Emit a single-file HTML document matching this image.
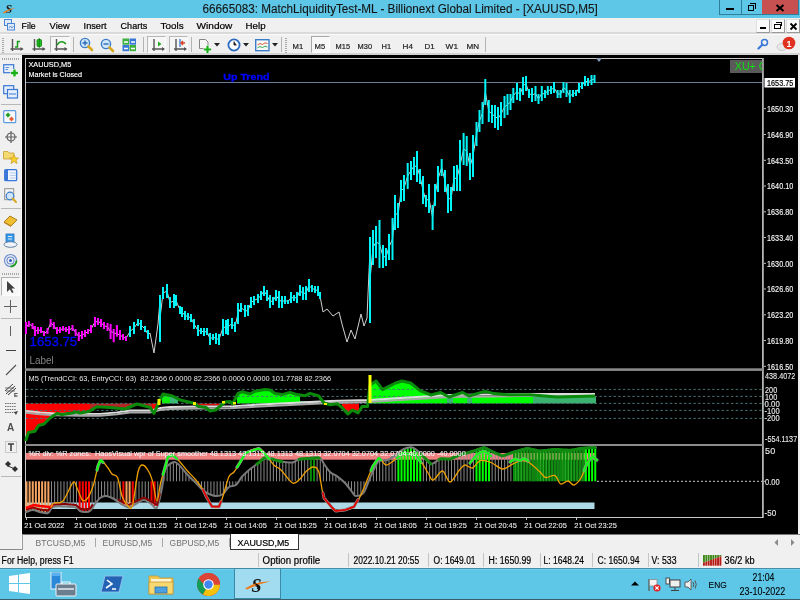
<!DOCTYPE html>
<html><head><meta charset="utf-8"><style>
html,body{margin:0;padding:0;width:800px;height:600px;overflow:hidden;background:#f0f0f0;position:relative;font-family:"Liberation Sans", sans-serif}
body{will-change:transform}
.t{position:absolute;white-space:nowrap;line-height:1;font-family:"Liberation Sans", sans-serif}
.b{position:absolute}
svg{position:absolute}
</style></head><body>
<div class="b" style="left:0px;top:0px;width:800px;height:18px;background:#5ec6e6"></div>
<svg style="left:202.00px;top:-1px;overflow:visible" width="406" height="21"><text x="0.6" y="14.00" font-family="Liberation Sans" font-size="12" font-weight="normal" fill="#141414" textLength="395.10" lengthAdjust="spacingAndGlyphs" stroke="#141414" stroke-width="0.1">66665083: MatchLiquidityTest-ML - Billionext Global Limited - [XAUUSD,M5]</text></svg>
<div class="b" style="left:719px;top:0px;width:80px;height:15px;background:#2f7f9c"></div>
<div class="b" style="left:720px;top:0px;width:21px;height:14px;background:#5ec6e6"></div>
<div class="b" style="left:742px;top:0px;width:20px;height:14px;background:#5ec6e6"></div>
<div class="b" style="left:762px;top:0px;width:36px;height:14px;background:#c75050"></div>
<div class="b" style="left:726px;top:8px;width:8px;height:2px;background:#000"></div>
<div class="b" style="left:748px;top:5px;width:6px;height:6px;border:1.6px solid #000;box-sizing:border-box"></div>
<div class="b" style="left:750px;top:3px;width:6px;height:6px;border-top:1.5px solid #000;border-right:1.5px solid #000;box-sizing:border-box"></div>
<svg style="left:775px;top:4px" width="10" height="8"><path d="M1.5 1L8.5 7M8.5 1L1.5 7" stroke="#000" stroke-width="2"/></svg>
<div class="b" style="left:0px;top:18px;width:800px;height:15px;background:#f0f0f0"></div>
<div class="b" style="left:0px;top:32px;width:800px;height:2px;background:#dadada"></div>
<svg style="left:21.00px;top:18px;overflow:visible" width="25" height="16"><text x="0.6" y="11.00" font-family="Liberation Sans" font-size="9" font-weight="normal" fill="#000" textLength="14.10" lengthAdjust="spacingAndGlyphs" stroke="#000" stroke-width="0.2">File</text></svg>
<svg style="left:49.00px;top:18px;overflow:visible" width="31" height="16"><text x="0.6" y="11.00" font-family="Liberation Sans" font-size="9" font-weight="normal" fill="#000" textLength="20.10" lengthAdjust="spacingAndGlyphs" stroke="#000" stroke-width="0.2">View</text></svg>
<svg style="left:82.60px;top:18px;overflow:visible" width="34" height="16"><text x="0.6" y="11.00" font-family="Liberation Sans" font-size="9" font-weight="normal" fill="#000" textLength="23.00" lengthAdjust="spacingAndGlyphs" stroke="#000" stroke-width="0.2">Insert</text></svg>
<svg style="left:119.60px;top:18px;overflow:visible" width="38" height="16"><text x="0.6" y="11.00" font-family="Liberation Sans" font-size="9" font-weight="normal" fill="#000" textLength="26.60" lengthAdjust="spacingAndGlyphs" stroke="#000" stroke-width="0.2">Charts</text></svg>
<svg style="left:160.00px;top:18px;overflow:visible" width="34" height="16"><text x="0.6" y="11.00" font-family="Liberation Sans" font-size="9" font-weight="normal" fill="#000" textLength="23.00" lengthAdjust="spacingAndGlyphs" stroke="#000" stroke-width="0.2">Tools</text></svg>
<svg style="left:196.40px;top:18px;overflow:visible" width="47" height="16"><text x="0.6" y="11.00" font-family="Liberation Sans" font-size="9" font-weight="normal" fill="#000" textLength="35.80" lengthAdjust="spacingAndGlyphs" stroke="#000" stroke-width="0.2">Window</text></svg>
<svg style="left:245.00px;top:18px;overflow:visible" width="31" height="16"><text x="0.6" y="11.00" font-family="Liberation Sans" font-size="9" font-weight="normal" fill="#000" textLength="20.00" lengthAdjust="spacingAndGlyphs" stroke="#000" stroke-width="0.2">Help</text></svg>
<div class="b" style="left:756px;top:19px;width:14px;height:14px;background:#fafafa;border:1px solid #9a9a9a;border-top-color:#e0e0e0;border-left-color:#e0e0e0;box-sizing:border-box"></div>
<div class="b" style="left:771px;top:19px;width:14px;height:14px;background:#fafafa;border:1px solid #9a9a9a;border-top-color:#e0e0e0;border-left-color:#e0e0e0;box-sizing:border-box"></div>
<div class="b" style="left:786px;top:19px;width:14px;height:14px;background:#fafafa;border:1px solid #9a9a9a;border-top-color:#e0e0e0;border-left-color:#e0e0e0;box-sizing:border-box"></div>
<div class="b" style="left:760px;top:27px;width:6px;height:2px;background:#000"></div>
<div class="b" style="left:774px;top:24px;width:7px;height:5px;border:1.5px solid #000;box-sizing:border-box"></div>
<div class="b" style="left:776px;top:22px;width:6px;height:4px;border-top:1.5px solid #000;border-right:1.5px solid #000;box-sizing:border-box"></div>
<svg style="left:789px;top:22px" width="9" height="9"><path d="M1.5 1.5L7.5 7.5M7.5 1.5L1.5 7.5" stroke="#000" stroke-width="1.8"/></svg>
<div class="b" style="left:0px;top:34px;width:800px;height:20px;background:#f0f0f0"></div>
<div class="b" style="left:0px;top:34px;width:800px;height:1px;background:#fafafa"></div>
<div class="b" style="left:0px;top:53px;width:800px;height:2px;background:#d4d4d4"></div>
<div class="b" style="left:311px;top:36px;width:19px;height:17px;background:#f8f8f8;border:1px solid #a8a8a8;border-right-color:#fdfdfd;border-bottom-color:#fdfdfd;box-sizing:border-box"></div>
<svg style="left:292.00px;top:39px;overflow:visible" width="22" height="14"><text x="0.6" y="9.60" font-family="Liberation Sans" font-size="8" font-weight="normal" fill="#222" textLength="10.60" lengthAdjust="spacingAndGlyphs" stroke="#222" stroke-width="0.2">M1</text></svg>
<svg style="left:314.00px;top:39px;overflow:visible" width="22" height="14"><text x="0.6" y="9.60" font-family="Liberation Sans" font-size="8" font-weight="normal" fill="#222" textLength="10.60" lengthAdjust="spacingAndGlyphs" stroke="#222" stroke-width="0.2">M5</text></svg>
<svg style="left:334.60px;top:39px;overflow:visible" width="25" height="14"><text x="0.6" y="9.60" font-family="Liberation Sans" font-size="8" font-weight="normal" fill="#222" textLength="14.40" lengthAdjust="spacingAndGlyphs" stroke="#222" stroke-width="0.2">M15</text></svg>
<svg style="left:356.50px;top:39px;overflow:visible" width="25" height="14"><text x="0.6" y="9.60" font-family="Liberation Sans" font-size="8" font-weight="normal" fill="#222" textLength="14.40" lengthAdjust="spacingAndGlyphs" stroke="#222" stroke-width="0.2">M30</text></svg>
<svg style="left:380.70px;top:39px;overflow:visible" width="21" height="14"><text x="0.6" y="9.60" font-family="Liberation Sans" font-size="8" font-weight="normal" fill="#222" textLength="9.60" lengthAdjust="spacingAndGlyphs" stroke="#222" stroke-width="0.2">H1</text></svg>
<svg style="left:401.70px;top:39px;overflow:visible" width="21" height="14"><text x="0.6" y="9.60" font-family="Liberation Sans" font-size="8" font-weight="normal" fill="#222" textLength="10.40" lengthAdjust="spacingAndGlyphs" stroke="#222" stroke-width="0.2">H4</text></svg>
<svg style="left:424.20px;top:39px;overflow:visible" width="21" height="14"><text x="0.6" y="9.60" font-family="Liberation Sans" font-size="8" font-weight="normal" fill="#222" textLength="10.10" lengthAdjust="spacingAndGlyphs" stroke="#222" stroke-width="0.2">D1</text></svg>
<svg style="left:445.20px;top:39px;overflow:visible" width="23" height="14"><text x="0.6" y="9.60" font-family="Liberation Sans" font-size="8" font-weight="normal" fill="#222" textLength="12.40" lengthAdjust="spacingAndGlyphs" stroke="#222" stroke-width="0.2">W1</text></svg>
<svg style="left:466.20px;top:39px;overflow:visible" width="24" height="14"><text x="0.6" y="9.60" font-family="Liberation Sans" font-size="8" font-weight="normal" fill="#222" textLength="12.60" lengthAdjust="spacingAndGlyphs" stroke="#222" stroke-width="0.2">MN</text></svg>
<div class="b" style="left:0px;top:55px;width:22px;height:495px;background:#f0f0f0"></div>
<div class="b" style="left:21px;top:55px;width:1px;height:495px;background:#fafafa"></div>
<div class="b" style="left:0px;top:549px;width:23px;height:1px;background:#8a8a8a"></div>
<div class="b" style="left:22px;top:55px;width:776px;height:479px;background:#000"></div>
<div class="b" style="left:798px;top:55px;width:2px;height:479px;background:#f0f0f0"></div>
<div class="b" style="left:22px;top:534px;width:778px;height:16px;background:#f0f0f0"></div>
<div class="b" style="left:22px;top:534px;width:778px;height:1px;background:#7a7a7a"></div>
<div class="b" style="left:22px;top:534px;width:1px;height:16px;background:#9a9a9a"></div>
<div class="b" style="left:230px;top:534px;width:69px;height:16px;background:#fff;border:1px solid #333;border-top:none;box-sizing:border-box"></div>
<svg style="left:35.00px;top:535px;overflow:visible" width="61" height="16"><text x="0.6" y="11.00" font-family="Liberation Sans" font-size="9" font-weight="normal" fill="#707070" textLength="49.60" lengthAdjust="spacingAndGlyphs">BTCUSD,M5</text></svg>
<svg style="left:102.00px;top:535px;overflow:visible" width="61" height="16"><text x="0.6" y="11.00" font-family="Liberation Sans" font-size="9" font-weight="normal" fill="#707070" textLength="49.60" lengthAdjust="spacingAndGlyphs">EURUSD,M5</text></svg>
<svg style="left:169.00px;top:535px;overflow:visible" width="61" height="16"><text x="0.6" y="11.00" font-family="Liberation Sans" font-size="9" font-weight="normal" fill="#707070" textLength="49.60" lengthAdjust="spacingAndGlyphs">GBPUSD,M5</text></svg>
<svg style="left:237.00px;top:535px;overflow:visible" width="63" height="16"><text x="0.6" y="11.00" font-family="Liberation Sans" font-size="9" font-weight="normal" fill="#000" textLength="51.60" lengthAdjust="spacingAndGlyphs" stroke="#000" stroke-width="0.2">XAUUSD,M5</text></svg>
<div class="b" style="left:95px;top:538px;width:1px;height:9px;background:#a8a8a8"></div>
<div class="b" style="left:162px;top:538px;width:1px;height:9px;background:#a8a8a8"></div>
<div class="b" style="left:229px;top:538px;width:1px;height:9px;background:#a8a8a8"></div>
<svg style="left:773px;top:538px" width="24" height="9"><path d="M5 1L1.5 4.5L5 8Z" fill="#8a8a8a"/><path d="M18 1L21.5 4.5L18 8Z" fill="#8a8a8a"/></svg>
<div class="b" style="left:0px;top:550px;width:800px;height:18px;background:#f0f0f0"></div>
<svg style="left:1.00px;top:552px;overflow:visible" width="83" height="18"><text x="0.6" y="12.00" font-family="Liberation Sans" font-size="10" font-weight="normal" fill="#000" textLength="72.10" lengthAdjust="spacingAndGlyphs" stroke="#000" stroke-width="0.2">For Help, press F1</text></svg>
<div class="b" style="left:258px;top:553px;width:1px;height:14px;background:#c4c4c4"></div>
<div class="b" style="left:348px;top:553px;width:1px;height:14px;background:#c4c4c4"></div>
<div class="b" style="left:428px;top:553px;width:1px;height:14px;background:#c4c4c4"></div>
<div class="b" style="left:483px;top:553px;width:1px;height:14px;background:#c4c4c4"></div>
<div class="b" style="left:540px;top:553px;width:1px;height:14px;background:#c4c4c4"></div>
<div class="b" style="left:592px;top:553px;width:1px;height:14px;background:#c4c4c4"></div>
<div class="b" style="left:648px;top:553px;width:1px;height:14px;background:#c4c4c4"></div>
<div class="b" style="left:698px;top:553px;width:1px;height:14px;background:#c4c4c4"></div>
<svg style="left:262.00px;top:552px;overflow:visible" width="69" height="18"><text x="0.6" y="12.00" font-family="Liberation Sans" font-size="10" font-weight="normal" fill="#000" textLength="57.60" lengthAdjust="spacingAndGlyphs" stroke="#000" stroke-width="0.2">Option profile</text></svg>
<svg style="left:352.50px;top:552px;overflow:visible" width="77" height="18"><text x="0.6" y="12.00" font-family="Liberation Sans" font-size="10" font-weight="normal" fill="#000" textLength="65.60" lengthAdjust="spacingAndGlyphs" stroke="#000" stroke-width="0.2">2022.10.21 20:55</text></svg>
<svg style="left:432.60px;top:552px;overflow:visible" width="53" height="18"><text x="0.6" y="12.00" font-family="Liberation Sans" font-size="10" font-weight="normal" fill="#000" textLength="42.00" lengthAdjust="spacingAndGlyphs" stroke="#000" stroke-width="0.2">O: 1649.01</text></svg>
<svg style="left:487.50px;top:552px;overflow:visible" width="54" height="18"><text x="0.6" y="12.00" font-family="Liberation Sans" font-size="10" font-weight="normal" fill="#000" textLength="42.60" lengthAdjust="spacingAndGlyphs" stroke="#000" stroke-width="0.2">H: 1650.99</text></svg>
<svg style="left:543.20px;top:552px;overflow:visible" width="51" height="18"><text x="0.6" y="12.00" font-family="Liberation Sans" font-size="10" font-weight="normal" fill="#000" textLength="40.40" lengthAdjust="spacingAndGlyphs" stroke="#000" stroke-width="0.2">L: 1648.24</text></svg>
<svg style="left:596.50px;top:552px;overflow:visible" width="53" height="18"><text x="0.6" y="12.00" font-family="Liberation Sans" font-size="10" font-weight="normal" fill="#000" textLength="41.80" lengthAdjust="spacingAndGlyphs" stroke="#000" stroke-width="0.2">C: 1650.94</text></svg>
<svg style="left:650.50px;top:552px;overflow:visible" width="36" height="18"><text x="0.6" y="12.00" font-family="Liberation Sans" font-size="10" font-weight="normal" fill="#000" textLength="24.90" lengthAdjust="spacingAndGlyphs" stroke="#000" stroke-width="0.2">V: 533</text></svg>
<svg style="left:724.00px;top:552px;overflow:visible" width="41" height="18"><text x="0.6" y="12.00" font-family="Liberation Sans" font-size="10" font-weight="normal" fill="#000" textLength="30.00" lengthAdjust="spacingAndGlyphs" stroke="#000" stroke-width="0.2">36/2 kb</text></svg>
<div class="b" style="left:0px;top:568px;width:800px;height:32px;background:#5ec6e6"></div>
<div class="b" style="left:0px;top:568px;width:800px;height:1px;background:#4a8ca4"></div>
<div class="b" style="left:0px;top:569px;width:800px;height:1px;background:#6ad2f2"></div>
<div class="b" style="left:0px;top:599px;width:800px;height:1px;background:#3c5e6c"></div>
<div class="b" style="left:234px;top:568px;width:47px;height:31px;background:#a2dcf0;border:1px solid #3d8aa6;box-sizing:border-box"></div>
<svg style="left:751.50px;top:568px;overflow:visible" width="33" height="18"><text x="0.6" y="13.30" font-family="Liberation Sans" font-size="10.3" font-weight="normal" fill="#000" textLength="21.90" lengthAdjust="spacingAndGlyphs" stroke="#000" stroke-width="0.1">21:04</text></svg>
<svg style="left:739.00px;top:582px;overflow:visible" width="57" height="18"><text x="0.6" y="12.50" font-family="Liberation Sans" font-size="10.3" font-weight="normal" fill="#000" textLength="45.60" lengthAdjust="spacingAndGlyphs" stroke="#000" stroke-width="0.1">23-10-2022</text></svg>
<svg style="left:707.80px;top:576px;overflow:visible" width="29" height="16"><text x="0.6" y="12.00" font-family="Liberation Sans" font-size="9.3" font-weight="normal" fill="#000" textLength="18.10" lengthAdjust="spacingAndGlyphs" stroke="#000" stroke-width="0.1">ENG</text></svg>
<svg style="left:0;top:0;will-change:transform" width="800" height="600" viewBox="0 0 800 600">
<rect x="25" y="58" width="738" height="1" fill="#c8c8c8"/>
<rect x="25" y="58" width="1" height="460" fill="#c8c8c8"/>
<rect x="762" y="58" width="1.8" height="460" fill="#b4b4b4"/>
<rect x="25" y="368.3" width="738" height="2.6" fill="#8a8a8a"/>
<rect x="25" y="444" width="738" height="2" fill="#8c8c8c"/>
<rect x="25" y="517" width="738" height="1" fill="#c8c8c8"/>
<rect x="26" y="82" width="736" height="1" fill="#6a7f95"/>
<polyline points="26.0,328.0 28.8,324.0 32.5,326.0 35.0,331.0 38.0,330.5 41.0,330.0 44.0,333.5 47.5,331.0 50.6,323.0 53.8,325.5 57.0,330.5 60.0,330.0 63.0,328.5 66.0,329.5 69.0,330.0 72.5,328.0 75.6,332.5 78.8,336.5 82.0,335.0 85.0,333.5 88.0,331.5 91.0,329.0 95.0,322.0 98.0,321.5 101.0,323.0 104.0,325.5 107.5,327.0 110.6,331.5 120.0,335.0 123.0,337.0 126.0,338.5 130.0,331.5 134.0,328.0 138.0,322.5 141.0,325.0 145.0,329.0 148.0,334.5" fill="none" stroke="#d0d0d0" stroke-width="1" stroke-linejoin="round" />
<polyline points="148.0,335.0 150.0,333.0 154.0,353.0 158.0,324.0 160.0,300.0" fill="none" stroke="#d0d0d0" stroke-width="1" stroke-linejoin="round" />
<polyline points="160.0,318.5 163.0,293.0 167.0,291.0 170.0,302.5 174.0,301.0 176.0,300.5 180.0,310.0 182.0,312.0 185.0,315.5 188.0,316.5 191.0,318.0 194.0,324.0 198.0,330.5 201.0,331.0 204.0,332.0 207.0,331.5 210.0,339.0 213.0,337.0 216.0,338.5 219.0,339.5 223.0,327.5 226.0,327.0 228.0,327.0 232.0,323.5 235.0,327.0 238.0,313.5 241.0,307.5 245.0,311.0 248.0,310.5 251.0,302.5 254.0,300.5 258.0,298.5 261.0,295.5 264.0,291.0 267.0,295.5 270.0,301.5 273.0,301.0 276.0,295.5 279.0,299.5 282.0,302.0 285.0,300.0 288.0,302.0 291.0,297.5 294.0,298.0 297.0,297.5 300.0,290.5 303.0,293.5 306.0,293.0 309.0,285.5 312.0,288.5 315.0,289.5 318.0,291.0 320.0,295.5" fill="none" stroke="#d0d0d0" stroke-width="1" stroke-linejoin="round" />
<polyline points="320.0,296.0 323.0,312.0 327.0,309.0 333.0,316.0 339.0,312.0 342.0,324.0 347.0,342.0 351.0,330.0 355.0,339.0 361.0,314.0 364.0,326.0 367.0,318.0 368.0,294.0 370.0,250.0" fill="none" stroke="#d0d0d0" stroke-width="1" stroke-linejoin="round" />
<polyline points="370.0,280.0 373.0,247.5 376.0,242.0 379.5,244.0 383.0,256.5 386.0,257.0 389.0,247.0 392.5,239.0 395.0,212.5 398.0,215.5 401.0,191.0 404.0,188.0 407.7,176.0 411.0,170.5 414.0,166.0 417.0,166.5 420.0,176.5 423.0,190.0 426.0,201.0 429.0,198.5 432.6,217.5 435.0,195.0 438.0,179.0 441.7,167.5 445.0,181.0 448.0,198.5 451.0,199.0 454.0,178.5 457.0,178.0 460.0,165.5 463.6,149.0 466.7,151.0 470.0,166.5 473.0,156.0 476.5,134.0 479.5,121.0 482.5,113.0 485.3,92.0 488.8,111.0 492.0,114.0 495.0,116.5 498.0,118.5 501.0,114.0 504.5,107.0 507.5,104.5 510.5,102.0 513.3,95.5 517.0,91.5 520.0,94.5 523.0,86.0 526.0,83.5 529.0,93.5 532.0,95.0 535.5,93.5 538.5,99.0 541.8,93.5 545.0,94.0 547.8,90.5 551.0,90.0 554.0,87.5 557.6,94.0 560.5,94.0 563.5,87.5 566.5,90.0 569.8,96.5 573.0,93.5 576.0,93.0 579.0,88.0 582.0,85.5 585.0,81.0 588.0,82.0 591.5,80.0 594.5,79.0" fill="none" stroke="#d0d0d0" stroke-width="1" stroke-linejoin="round" />
<rect x="25.0" y="322" width="2" height="12" fill="#ff00ff"/>
<rect x="27.8" y="321" width="2" height="6" fill="#ff00ff"/>
<rect x="31.5" y="323" width="2" height="6" fill="#ff00ff"/>
<rect x="34.0" y="326" width="2" height="10" fill="#ff00ff"/>
<rect x="37.0" y="327" width="2" height="7" fill="#ff00ff"/>
<rect x="40.0" y="327" width="2" height="6" fill="#ff00ff"/>
<rect x="43.0" y="331" width="2" height="5" fill="#ff00ff"/>
<rect x="46.5" y="328" width="2" height="6" fill="#ff00ff"/>
<rect x="49.6" y="319" width="2" height="8" fill="#ff00ff"/>
<rect x="52.8" y="322" width="2" height="7" fill="#ff00ff"/>
<rect x="56.0" y="327" width="2" height="7" fill="#ff00ff"/>
<rect x="59.0" y="327" width="2" height="6" fill="#ff00ff"/>
<rect x="62.0" y="326" width="2" height="5" fill="#ff00ff"/>
<rect x="65.0" y="327" width="2" height="5" fill="#ff00ff"/>
<rect x="68.0" y="326" width="2" height="8" fill="#ff00ff"/>
<rect x="71.5" y="325" width="2" height="6" fill="#ff00ff"/>
<rect x="74.6" y="329" width="2" height="7" fill="#ff00ff"/>
<rect x="77.8" y="332" width="2" height="9" fill="#ff00ff"/>
<rect x="81.0" y="331" width="2" height="8" fill="#ff00ff"/>
<rect x="84.0" y="330" width="2" height="7" fill="#ff00ff"/>
<rect x="87.0" y="329" width="2" height="5" fill="#ff00ff"/>
<rect x="90.0" y="325" width="2" height="8" fill="#ff00ff"/>
<rect x="94.0" y="317" width="2" height="10" fill="#ff00ff"/>
<rect x="97.0" y="318" width="2" height="7" fill="#ff00ff"/>
<rect x="100.0" y="319" width="2" height="8" fill="#ff00ff"/>
<rect x="103.0" y="322" width="2" height="7" fill="#ff00ff"/>
<rect x="106.5" y="323" width="2" height="8" fill="#ff00ff"/>
<rect x="109.6" y="324" width="2" height="15" fill="#ff00ff"/>
<rect x="112.7" y="329.0" width="2" height="13.300000000000011" fill="#ff00ff"/>
<rect x="115.9" y="325.0" width="2" height="11.699999999999989" fill="#ff00ff"/>
<rect x="119.0" y="330" width="2" height="10" fill="#ff00ff"/>
<rect x="122.0" y="334" width="2" height="6" fill="#ff00ff"/>
<rect x="125.0" y="336" width="2" height="5" fill="#ff00ff"/>
<rect x="129.0" y="326" width="2" height="11" fill="#00f4f8"/>
<rect x="133.0" y="322" width="2" height="12" fill="#00f4f8"/>
<rect x="137.0" y="319" width="2" height="7" fill="#00f4f8"/>
<rect x="140.0" y="320" width="2" height="10" fill="#00f4f8"/>
<rect x="144.0" y="326" width="2" height="6" fill="#00f4f8"/>
<rect x="147.0" y="330" width="2" height="9" fill="#00f4f8"/>
<rect x="159.0" y="295" width="2" height="47" fill="#00f4f8"/>
<rect x="162.0" y="287" width="2" height="12" fill="#00f4f8"/>
<rect x="166.0" y="284" width="2" height="14" fill="#00f4f8"/>
<rect x="169.0" y="297" width="2" height="11" fill="#00f4f8"/>
<rect x="173.0" y="294" width="2" height="14" fill="#00f4f8"/>
<rect x="175.0" y="295" width="2" height="11" fill="#00f4f8"/>
<rect x="179.0" y="306" width="2" height="8" fill="#00f4f8"/>
<rect x="181.0" y="307" width="2" height="10" fill="#00f4f8"/>
<rect x="184.0" y="311" width="2" height="9" fill="#00f4f8"/>
<rect x="187.0" y="313" width="2" height="7" fill="#00f4f8"/>
<rect x="190.0" y="314" width="2" height="8" fill="#00f4f8"/>
<rect x="193.0" y="319" width="2" height="10" fill="#00f4f8"/>
<rect x="197.0" y="325" width="2" height="11" fill="#00f4f8"/>
<rect x="200.0" y="328" width="2" height="6" fill="#00f4f8"/>
<rect x="203.0" y="328" width="2" height="8" fill="#00f4f8"/>
<rect x="206.0" y="328" width="2" height="7" fill="#00f4f8"/>
<rect x="209.0" y="333" width="2" height="12" fill="#00f4f8"/>
<rect x="212.0" y="334" width="2" height="6" fill="#00f4f8"/>
<rect x="215.0" y="333" width="2" height="11" fill="#00f4f8"/>
<rect x="218.0" y="334" width="2" height="11" fill="#00f4f8"/>
<rect x="222.0" y="319" width="2" height="17" fill="#00f4f8"/>
<rect x="225.0" y="320" width="2" height="14" fill="#00f4f8"/>
<rect x="227.0" y="319" width="2" height="16" fill="#00f4f8"/>
<rect x="231.0" y="318" width="2" height="11" fill="#00f4f8"/>
<rect x="234.0" y="322" width="2" height="10" fill="#00f4f8"/>
<rect x="237.0" y="303" width="2" height="21" fill="#00f4f8"/>
<rect x="240.0" y="303" width="2" height="9" fill="#00f4f8"/>
<rect x="244.0" y="305" width="2" height="12" fill="#00f4f8"/>
<rect x="247.0" y="305" width="2" height="11" fill="#00f4f8"/>
<rect x="250.0" y="297" width="2" height="11" fill="#00f4f8"/>
<rect x="253.0" y="296" width="2" height="9" fill="#00f4f8"/>
<rect x="257.0" y="294" width="2" height="9" fill="#00f4f8"/>
<rect x="260.0" y="291" width="2" height="9" fill="#00f4f8"/>
<rect x="263.0" y="286" width="2" height="10" fill="#00f4f8"/>
<rect x="266.0" y="290" width="2" height="11" fill="#00f4f8"/>
<rect x="269.0" y="295" width="2" height="13" fill="#00f4f8"/>
<rect x="272.0" y="297" width="2" height="8" fill="#00f4f8"/>
<rect x="275.0" y="290" width="2" height="11" fill="#00f4f8"/>
<rect x="278.0" y="291" width="2" height="17" fill="#00f4f8"/>
<rect x="281.0" y="296" width="2" height="12" fill="#00f4f8"/>
<rect x="284.0" y="296" width="2" height="8" fill="#00f4f8"/>
<rect x="287.0" y="300" width="2" height="4" fill="#00f4f8"/>
<rect x="290.0" y="292" width="2" height="11" fill="#00f4f8"/>
<rect x="293.0" y="295" width="2" height="6" fill="#00f4f8"/>
<rect x="296.0" y="292" width="2" height="11" fill="#00f4f8"/>
<rect x="299.0" y="285" width="2" height="11" fill="#00f4f8"/>
<rect x="302.0" y="287" width="2" height="13" fill="#00f4f8"/>
<rect x="305.0" y="286" width="2" height="14" fill="#00f4f8"/>
<rect x="308.0" y="279" width="2" height="13" fill="#00f4f8"/>
<rect x="311.0" y="285" width="2" height="7" fill="#00f4f8"/>
<rect x="314.0" y="286" width="2" height="7" fill="#00f4f8"/>
<rect x="317.0" y="286" width="2" height="10" fill="#00f4f8"/>
<rect x="319.0" y="292" width="2" height="7" fill="#00f4f8"/>
<rect x="369.0" y="237" width="2" height="86" fill="#00f4f8"/>
<rect x="372.0" y="230" width="2" height="35" fill="#00f4f8"/>
<rect x="375.0" y="226" width="2" height="32" fill="#00f4f8"/>
<rect x="378.5" y="220" width="2" height="48" fill="#00f4f8"/>
<rect x="382.0" y="245" width="2" height="23" fill="#00f4f8"/>
<rect x="385.0" y="248" width="2" height="18" fill="#00f4f8"/>
<rect x="388.0" y="234" width="2" height="26" fill="#00f4f8"/>
<rect x="391.5" y="218" width="2" height="42" fill="#00f4f8"/>
<rect x="394.0" y="195" width="2" height="35" fill="#00f4f8"/>
<rect x="397.0" y="203" width="2" height="25" fill="#00f4f8"/>
<rect x="400.0" y="180" width="2" height="22" fill="#00f4f8"/>
<rect x="403.0" y="175" width="2" height="26" fill="#00f4f8"/>
<rect x="406.7" y="163" width="2" height="26" fill="#00f4f8"/>
<rect x="410.0" y="161" width="2" height="19" fill="#00f4f8"/>
<rect x="413.0" y="157" width="2" height="18" fill="#00f4f8"/>
<rect x="416.0" y="151" width="2" height="31" fill="#00f4f8"/>
<rect x="419.0" y="169" width="2" height="15" fill="#00f4f8"/>
<rect x="422.0" y="176" width="2" height="28" fill="#00f4f8"/>
<rect x="425.0" y="195" width="2" height="12" fill="#00f4f8"/>
<rect x="428.0" y="184" width="2" height="29" fill="#00f4f8"/>
<rect x="431.6" y="205" width="2" height="25" fill="#00f4f8"/>
<rect x="434.0" y="184" width="2" height="22" fill="#00f4f8"/>
<rect x="437.0" y="166" width="2" height="26" fill="#00f4f8"/>
<rect x="440.7" y="159" width="2" height="17" fill="#00f4f8"/>
<rect x="444.0" y="170" width="2" height="22" fill="#00f4f8"/>
<rect x="447.0" y="184" width="2" height="29" fill="#00f4f8"/>
<rect x="450.0" y="187" width="2" height="24" fill="#00f4f8"/>
<rect x="453.0" y="166" width="2" height="25" fill="#00f4f8"/>
<rect x="456.0" y="165" width="2" height="26" fill="#00f4f8"/>
<rect x="459.0" y="140" width="2" height="51" fill="#00f4f8"/>
<rect x="462.6" y="133" width="2" height="32" fill="#00f4f8"/>
<rect x="465.7" y="136" width="2" height="30" fill="#00f4f8"/>
<rect x="469.0" y="153" width="2" height="27" fill="#00f4f8"/>
<rect x="472.0" y="135" width="2" height="42" fill="#00f4f8"/>
<rect x="475.5" y="122" width="2" height="24" fill="#00f4f8"/>
<rect x="478.5" y="110" width="2" height="22" fill="#00f4f8"/>
<rect x="481.5" y="102" width="2" height="22" fill="#00f4f8"/>
<rect x="484.3" y="79" width="2" height="26" fill="#00f4f8"/>
<rect x="487.8" y="100" width="2" height="22" fill="#00f4f8"/>
<rect x="491.0" y="105" width="2" height="18" fill="#00f4f8"/>
<rect x="494.0" y="105" width="2" height="23" fill="#00f4f8"/>
<rect x="497.0" y="107" width="2" height="23" fill="#00f4f8"/>
<rect x="500.0" y="102" width="2" height="24" fill="#00f4f8"/>
<rect x="503.5" y="96" width="2" height="22" fill="#00f4f8"/>
<rect x="506.5" y="94" width="2" height="21" fill="#00f4f8"/>
<rect x="509.5" y="94" width="2" height="16" fill="#00f4f8"/>
<rect x="512.3" y="88" width="2" height="15" fill="#00f4f8"/>
<rect x="516.0" y="83" width="2" height="17" fill="#00f4f8"/>
<rect x="519.0" y="88" width="2" height="13" fill="#00f4f8"/>
<rect x="522.0" y="77" width="2" height="18" fill="#00f4f8"/>
<rect x="525.0" y="76" width="2" height="15" fill="#00f4f8"/>
<rect x="528.0" y="89" width="2" height="9" fill="#00f4f8"/>
<rect x="531.0" y="88" width="2" height="14" fill="#00f4f8"/>
<rect x="534.5" y="86" width="2" height="15" fill="#00f4f8"/>
<rect x="537.5" y="94" width="2" height="10" fill="#00f4f8"/>
<rect x="540.8" y="86" width="2" height="15" fill="#00f4f8"/>
<rect x="544.0" y="90" width="2" height="8" fill="#00f4f8"/>
<rect x="546.8" y="86" width="2" height="9" fill="#00f4f8"/>
<rect x="550.0" y="86" width="2" height="8" fill="#00f4f8"/>
<rect x="553.0" y="82" width="2" height="11" fill="#00f4f8"/>
<rect x="556.6" y="90" width="2" height="8" fill="#00f4f8"/>
<rect x="559.5" y="90" width="2" height="8" fill="#00f4f8"/>
<rect x="562.5" y="82" width="2" height="11" fill="#00f4f8"/>
<rect x="565.5" y="83" width="2" height="14" fill="#00f4f8"/>
<rect x="568.8" y="90" width="2" height="13" fill="#00f4f8"/>
<rect x="572.0" y="90" width="2" height="7" fill="#00f4f8"/>
<rect x="575.0" y="90" width="2" height="6" fill="#00f4f8"/>
<rect x="578.0" y="83" width="2" height="10" fill="#00f4f8"/>
<rect x="581.0" y="82" width="2" height="7" fill="#00f4f8"/>
<rect x="584.0" y="76" width="2" height="10" fill="#00f4f8"/>
<rect x="587.0" y="78" width="2" height="8" fill="#00f4f8"/>
<rect x="590.5" y="75" width="2" height="10" fill="#00f4f8"/>
<rect x="593.5" y="75" width="2" height="8" fill="#00f4f8"/>
<text x="28.40" y="67" font-family="Liberation Sans" font-size="7.6" fill="#fff" font-weight="normal" text-anchor="start" textLength="42.90" lengthAdjust="spacingAndGlyphs" stroke="#fff" stroke-width="0.15">XAUUSD,M5</text>
<text x="28.40" y="77" font-family="Liberation Sans" font-size="7.8" fill="#fff" font-weight="normal" text-anchor="start" textLength="53.60" lengthAdjust="spacingAndGlyphs" stroke="#fff" stroke-width="0.15">Market is Closed</text>
<text x="223.30" y="80" font-family="Liberation Sans" font-size="9.5" fill="#0000ff" font-weight="bold" text-anchor="start" textLength="46.10" lengthAdjust="spacingAndGlyphs" stroke="#0000ff" stroke-width="0.35">Up Trend</text>
<text x="29.60" y="345.6" font-family="Liberation Sans" font-size="12.6" fill="#0000ff" font-weight="normal" text-anchor="start" textLength="47.60" lengthAdjust="spacingAndGlyphs" stroke="#0000ff" stroke-width="0.3">1653.75</text>
<text x="29.60" y="363.8" font-family="Liberation Sans" font-size="10" fill="#858585" font-weight="normal" text-anchor="start" textLength="24.10" lengthAdjust="spacingAndGlyphs">Label</text>
<svg x="730" y="60" width="32.5" height="13"><rect x="0" y="0" width="32.5" height="13" fill="#5a5a5a"/><text x="4.80" y="10.2" font-family="Liberation Sans" font-size="11" fill="#10e010" font-weight="normal" text-anchor="start" textLength="31.60" lengthAdjust="spacingAndGlyphs">XU+ C</text></svg>
<polygon points="596,58 602,58 599,62" fill="#8aa0b8"/>
<rect x="764.5" y="78" width="30.5" height="9.5" fill="#fff"/>
<text x="767.10" y="86" font-family="Liberation Sans" font-size="8.6" fill="#000" font-weight="normal" text-anchor="start" textLength="26.10" lengthAdjust="spacingAndGlyphs" stroke="#000" stroke-width="0.2">1653.75</text>
<rect x="764" y="108.2" width="2" height="1" fill="#c0c0c0"/>
<text x="767.10" y="111.9" font-family="Liberation Sans" font-size="8.8" fill="#f4f4f4" font-weight="normal" text-anchor="start" textLength="26.10" lengthAdjust="spacingAndGlyphs" stroke="#f4f4f4" stroke-width="0.15">1650.30</text>
<rect x="764" y="134.0" width="2" height="1" fill="#c0c0c0"/>
<text x="767.10" y="137.7" font-family="Liberation Sans" font-size="8.8" fill="#f4f4f4" font-weight="normal" text-anchor="start" textLength="26.10" lengthAdjust="spacingAndGlyphs" stroke="#f4f4f4" stroke-width="0.15">1646.90</text>
<rect x="764" y="159.8" width="2" height="1" fill="#c0c0c0"/>
<text x="767.10" y="163.5" font-family="Liberation Sans" font-size="8.8" fill="#f4f4f4" font-weight="normal" text-anchor="start" textLength="26.10" lengthAdjust="spacingAndGlyphs" stroke="#f4f4f4" stroke-width="0.15">1643.50</text>
<rect x="764" y="185.5" width="2" height="1" fill="#c0c0c0"/>
<text x="767.10" y="189.2" font-family="Liberation Sans" font-size="8.8" fill="#f4f4f4" font-weight="normal" text-anchor="start" textLength="26.10" lengthAdjust="spacingAndGlyphs" stroke="#f4f4f4" stroke-width="0.15">1640.10</text>
<rect x="764" y="211.3" width="2" height="1" fill="#c0c0c0"/>
<text x="767.10" y="215.0" font-family="Liberation Sans" font-size="8.8" fill="#f4f4f4" font-weight="normal" text-anchor="start" textLength="26.10" lengthAdjust="spacingAndGlyphs" stroke="#f4f4f4" stroke-width="0.15">1636.80</text>
<rect x="764" y="237.0" width="2" height="1" fill="#c0c0c0"/>
<text x="767.10" y="240.7" font-family="Liberation Sans" font-size="8.8" fill="#f4f4f4" font-weight="normal" text-anchor="start" textLength="26.10" lengthAdjust="spacingAndGlyphs" stroke="#f4f4f4" stroke-width="0.15">1633.40</text>
<rect x="764" y="262.8" width="2" height="1" fill="#c0c0c0"/>
<text x="767.10" y="266.5" font-family="Liberation Sans" font-size="8.8" fill="#f4f4f4" font-weight="normal" text-anchor="start" textLength="26.10" lengthAdjust="spacingAndGlyphs" stroke="#f4f4f4" stroke-width="0.15">1630.00</text>
<rect x="764" y="288.5" width="2" height="1" fill="#c0c0c0"/>
<text x="767.10" y="292.2" font-family="Liberation Sans" font-size="8.8" fill="#f4f4f4" font-weight="normal" text-anchor="start" textLength="26.10" lengthAdjust="spacingAndGlyphs" stroke="#f4f4f4" stroke-width="0.15">1626.60</text>
<rect x="764" y="314.3" width="2" height="1" fill="#c0c0c0"/>
<text x="767.10" y="318.0" font-family="Liberation Sans" font-size="8.8" fill="#f4f4f4" font-weight="normal" text-anchor="start" textLength="26.10" lengthAdjust="spacingAndGlyphs" stroke="#f4f4f4" stroke-width="0.15">1623.20</text>
<rect x="764" y="340.0" width="2" height="1" fill="#c0c0c0"/>
<text x="767.10" y="343.7" font-family="Liberation Sans" font-size="8.8" fill="#f4f4f4" font-weight="normal" text-anchor="start" textLength="26.10" lengthAdjust="spacingAndGlyphs" stroke="#f4f4f4" stroke-width="0.15">1619.80</text>
<rect x="764" y="365.8" width="2" height="1" fill="#c0c0c0"/>
<text x="767.10" y="369.5" font-family="Liberation Sans" font-size="8.8" fill="#f4f4f4" font-weight="normal" text-anchor="start" textLength="26.10" lengthAdjust="spacingAndGlyphs" stroke="#f4f4f4" stroke-width="0.15">1616.50</text>
<polygon points="26.0,403.4 27.0,403.4 28.0,403.4 29.0,403.4 30.0,403.4 31.0,403.4 32.0,403.4 33.0,403.4 34.0,403.4 35.0,403.4 36.0,403.4 37.0,403.4 38.0,403.4 39.0,403.4 40.0,403.4 41.0,403.4 42.0,403.4 43.0,403.4 44.0,403.4 45.0,403.4 46.0,403.4 47.0,403.4 48.0,403.4 49.0,403.4 50.0,403.4 51.0,403.4 52.0,403.4 53.0,403.4 54.0,403.4 55.0,403.4 56.0,403.4 57.0,403.4 58.0,403.4 59.0,403.4 60.0,403.4 61.0,403.4 62.0,403.4 63.0,403.4 64.0,403.4 65.0,403.4 66.0,403.4 67.0,403.4 68.0,403.4 69.0,403.4 70.0,403.4 71.0,403.4 72.0,403.4 73.0,403.4 74.0,403.4 75.0,403.4 76.0,403.4 77.0,403.4 78.0,403.4 79.0,403.4 80.0,403.4 81.0,403.4 82.0,403.4 83.0,403.4 84.0,403.4 85.0,403.4 86.0,403.4 87.0,403.4 88.0,403.4 89.0,403.4 90.0,403.4 90.0,412.3 89.0,412.3 88.0,412.3 87.0,412.3 86.0,412.3 85.0,412.3 84.0,412.3 83.0,412.5 82.0,412.7 81.0,412.8 80.0,413.0 79.0,412.8 78.0,412.5 77.0,412.2 76.0,412.2 75.0,412.2 74.0,412.5 73.0,412.8 72.0,413.0 71.0,413.1 70.0,413.3 69.0,413.4 68.0,413.6 67.0,413.8 66.0,413.9 65.0,414.1 64.0,414.2 63.0,414.4 62.0,414.5 61.0,414.3 60.0,414.1 59.0,413.9 58.0,413.7 57.0,413.5 56.0,414.1 55.0,414.8 54.0,415.4 53.0,416.0 52.0,416.7 51.0,417.3 50.0,418.0 49.0,419.0 48.0,420.0 47.0,421.0 46.0,422.0 45.0,423.0 44.0,424.0 43.0,424.3 42.0,424.5 41.0,424.8 40.0,425.1 39.0,425.4 38.0,426.3 37.0,427.9 36.0,429.6 35.0,431.2 34.0,431.4 33.0,431.6 32.0,431.8 31.0,432.0 30.0,432.2 29.0,432.4 28.0,433.7 27.0,436.8 26.0,439.8" fill="#ff0000" />
<polygon points="90.0,403.4 91.0,403.4 92.0,403.4 93.0,403.4 94.0,403.4 95.0,403.4 96.0,403.4 97.0,403.4 98.0,403.4 99.0,403.4 100.0,403.4 101.0,403.4 102.0,403.4 103.0,403.4 104.0,403.4 105.0,403.4 106.0,403.4 107.0,403.4 108.0,403.4 109.0,403.4 110.0,403.4 111.0,403.4 112.0,403.4 113.0,403.4 114.0,403.4 115.0,403.4 116.0,403.4 117.0,403.4 118.0,403.4 119.0,403.4 120.0,403.4 121.0,403.4 122.0,403.4 123.0,403.4 124.0,403.4 125.0,403.4 126.0,403.4 127.0,403.4 128.0,403.4 129.0,403.4 130.0,403.4 131.0,403.4 132.0,403.4 133.0,403.4 134.0,403.4 135.0,403.4 136.0,403.4 137.0,403.4 138.0,403.4 139.0,403.4 140.0,403.4 141.0,403.4 142.0,403.4 143.0,403.4 144.0,403.4 145.0,403.4 146.0,403.4 147.0,403.4 148.0,403.4 149.0,403.4 150.0,403.4 151.0,403.4 152.0,403.4 152.0,410.4 151.0,408.9 150.0,407.4 149.0,407.1 148.0,406.9 147.0,406.6 146.0,406.4 145.0,406.1 144.0,405.8 143.0,405.6 142.0,405.3 141.0,405.0 140.0,404.8 139.0,404.5 138.0,404.3 137.0,404.0 136.0,404.4 135.0,404.8 134.0,405.2 133.0,405.7 132.0,406.1 131.0,406.5 130.0,406.9 129.0,407.3 128.0,407.8 127.0,408.2 126.0,408.6 125.0,409.0 124.0,408.9 123.0,408.8 122.0,408.7 121.0,408.6 120.0,408.5 119.0,408.4 118.0,408.3 117.0,408.2 116.0,408.1 115.0,407.9 114.0,407.8 113.0,407.7 112.0,407.6 111.0,407.5 110.0,407.4 109.0,407.4 108.0,407.3 107.0,407.3 106.0,407.2 105.0,407.2 104.0,407.1 103.0,407.1 102.0,407.0 101.0,407.0 100.0,406.9 99.0,406.9 98.0,406.8 97.0,406.8 96.0,407.4 95.0,407.9 94.0,408.4 93.0,409.0 92.0,409.7 91.0,410.3 90.0,411.0" fill="#b42828" />
<polygon points="152.0,403.4 153.0,403.4 154.0,403.4 155.0,403.4 156.0,403.4 157.0,403.4 157.0,407.2 156.0,408.8 155.0,411.1 154.0,413.5 153.0,412.0 152.0,410.4" fill="#ff0000" />
<polygon points="196.0,403.4 197.0,403.4 198.0,403.4 199.0,403.4 200.0,403.4 201.0,403.4 202.0,403.4 203.0,403.4 204.0,403.4 205.0,403.4 206.0,403.4 207.0,403.4 208.0,403.4 209.0,403.4 210.0,403.4 211.0,403.4 212.0,403.4 213.0,403.4 214.0,403.4 215.0,403.4 216.0,403.4 217.0,403.4 218.0,403.4 219.0,403.4 220.0,403.4 221.0,403.4 221.0,405.4 220.0,405.5 219.0,405.5 218.0,405.5 217.0,405.5 216.0,405.5 215.0,405.5 214.0,405.5 213.0,405.5 212.0,405.5 211.0,405.5 210.0,405.5 209.0,405.5 208.0,405.5 207.0,405.5 206.0,405.5 205.0,405.5 204.0,405.5 203.0,405.5 202.0,405.5 201.0,405.5 200.0,405.5 199.0,405.5 198.0,405.5 197.0,405.4 196.0,404.8" fill="#e01010" />
<polygon points="342.0,403.4 343.0,403.4 344.0,403.4 345.0,403.4 346.0,403.4 347.0,403.4 348.0,403.4 349.0,403.4 350.0,403.4 351.0,403.4 352.0,403.4 353.0,403.4 354.0,403.4 355.0,403.4 356.0,403.4 357.0,403.4 358.0,403.4 359.0,403.4 359.0,411.4 358.0,413.0 357.0,412.5 356.0,411.9 355.0,411.4 354.0,410.8 353.0,410.3 352.0,410.4 351.0,411.3 350.0,412.1 349.0,413.0 348.0,413.8 347.0,413.1 346.0,412.0 345.0,410.9 344.0,409.7 343.0,408.6 342.0,407.5" fill="#ff0000" />
<polygon points="162.0,396.0 163.0,394.0 164.0,394.2 165.0,394.4 166.0,394.6 167.0,394.8 168.0,395.1 169.0,395.3 170.0,395.5 170.0,403.4 169.0,403.4 168.0,403.4 167.0,403.4 166.0,403.4 165.0,403.4 164.0,403.4 163.0,403.4 162.0,403.4" fill="#10f010" />
<polygon points="170.0,395.5 171.0,395.7 172.0,395.9 173.0,396.3 174.0,396.8 175.0,397.3 176.0,397.9 177.0,398.4 178.0,398.9 178.0,403.4 177.0,403.4 176.0,403.4 175.0,403.4 174.0,403.4 173.0,403.4 172.0,403.4 171.0,403.4 170.0,403.4" fill="#3cb878" />
<polygon points="237.0,395.4 238.0,393.5 239.0,393.1 240.0,392.6 241.0,392.2 242.0,391.8 243.0,392.1 244.0,392.4 245.0,392.6 246.0,392.9 247.0,393.2 248.0,393.4 249.0,393.7 250.0,394.0 251.0,393.4 252.0,392.9 253.0,392.4 254.0,391.8 255.0,391.2 256.0,391.1 257.0,390.9 258.0,390.8 259.0,390.6 260.0,390.4 261.0,390.3 262.0,390.1 263.0,389.9 264.0,389.8 265.0,389.6 266.0,389.7 267.0,389.8 268.0,389.8 269.0,389.9 270.0,390.0 271.0,390.7 272.0,391.4 273.0,392.1 274.0,392.8 275.0,393.5 276.0,393.7 277.0,393.8 278.0,394.0 279.0,394.1 280.0,394.3 281.0,394.4 282.0,394.6 283.0,394.3 284.0,394.1 285.0,393.8 286.0,393.5 287.0,393.2 288.0,392.9 289.0,392.7 290.0,392.4 291.0,392.7 292.0,393.0 293.0,393.3 294.0,393.7 295.0,394.0 296.0,394.3 297.0,394.6 298.0,394.7 299.0,394.9 300.0,395.0 300.0,403.4 299.0,403.4 298.0,403.4 297.0,403.4 296.0,403.4 295.0,403.4 294.0,403.4 293.0,403.4 292.0,403.4 291.0,403.4 290.0,403.4 289.0,403.4 288.0,403.4 287.0,403.4 286.0,403.4 285.0,403.4 284.0,403.4 283.0,403.4 282.0,403.4 281.0,403.4 280.0,403.4 279.0,403.4 278.0,403.4 277.0,403.4 276.0,403.4 275.0,403.4 274.0,403.4 273.0,403.4 272.0,403.4 271.0,403.4 270.0,403.4 269.0,403.4 268.0,403.4 267.0,403.4 266.0,403.4 265.0,403.4 264.0,403.4 263.0,403.4 262.0,403.4 261.0,403.4 260.0,403.4 259.0,403.4 258.0,403.4 257.0,403.4 256.0,403.4 255.0,403.4 254.0,403.4 253.0,403.4 252.0,403.4 251.0,403.4 250.0,403.4 249.0,403.4 248.0,403.4 247.0,403.4 246.0,403.4 245.0,403.4 244.0,403.4 243.0,403.4 242.0,403.4 241.0,403.4 240.0,403.4 239.0,403.4 238.0,403.4 237.0,403.4" fill="#00ff00" />
<polygon points="300.0,401.0 301.0,401.0 302.0,401.0 303.0,401.0 304.0,401.0 305.0,401.0 306.0,401.0 307.0,401.0 308.0,401.0 309.0,401.0 310.0,401.0 311.0,401.0 312.0,401.0 313.0,401.0 314.0,401.0 315.0,401.0 316.0,401.0 317.0,401.0 318.0,401.0 318.0,403.4 317.0,403.4 316.0,403.4 315.0,403.4 314.0,403.4 313.0,403.4 312.0,403.4 311.0,403.4 310.0,403.4 309.0,403.4 308.0,403.4 307.0,403.4 306.0,403.4 305.0,403.4 304.0,403.4 303.0,403.4 302.0,403.4 301.0,403.4 300.0,403.4" fill="#2a9a50" />
<polygon points="370.0,385.0 371.0,384.3 372.0,383.7 373.0,383.0 374.0,382.3 375.0,381.7 376.0,381.0 377.0,382.3 378.0,383.7 379.0,385.0 380.0,386.4 381.0,387.7 382.0,389.0 383.0,389.4 384.0,388.9 385.0,388.4 386.0,387.9 387.0,387.4 388.0,386.9 389.0,386.4 390.0,385.9 391.0,385.4 392.0,384.8 393.0,384.3 394.0,383.8 395.0,383.3 396.0,382.9 397.0,382.6 398.0,382.2 399.0,381.9 400.0,381.6 401.0,381.3 402.0,381.0 403.0,381.2 404.0,381.5 405.0,381.7 406.0,381.9 407.0,382.2 408.0,382.4 409.0,382.6 410.0,382.9 411.0,383.3 412.0,384.1 413.0,384.9 414.0,385.7 415.0,386.6 416.0,387.4 417.0,388.2 418.0,389.0 419.0,389.8 420.0,390.6 421.0,391.0 422.0,391.4 423.0,391.8 424.0,392.2 425.0,392.6 426.0,393.0 427.0,393.4 428.0,393.8 429.0,394.2 430.0,394.6 431.0,395.0 432.0,394.7 433.0,394.5 434.0,394.2 435.0,394.0 436.0,393.7 437.0,393.4 438.0,393.2 439.0,392.9 440.0,392.7 441.0,392.7 442.0,393.2 443.0,393.8 444.0,394.3 445.0,394.9 446.0,395.4 447.0,395.9 447.0,403.4 446.0,403.4 445.0,403.4 444.0,403.4 443.0,403.4 442.0,403.4 441.0,403.4 440.0,403.4 439.0,403.4 438.0,403.4 437.0,403.4 436.0,403.4 435.0,403.4 434.0,403.4 433.0,403.4 432.0,403.4 431.0,403.4 430.0,403.4 429.0,403.4 428.0,403.4 427.0,403.4 426.0,403.4 425.0,403.4 424.0,403.4 423.0,403.4 422.0,403.4 421.0,403.4 420.0,403.4 419.0,403.4 418.0,403.4 417.0,403.4 416.0,403.4 415.0,403.4 414.0,403.4 413.0,403.4 412.0,403.4 411.0,403.4 410.0,403.4 409.0,403.4 408.0,403.4 407.0,403.4 406.0,403.4 405.0,403.4 404.0,403.4 403.0,403.4 402.0,403.4 401.0,403.4 400.0,403.4 399.0,403.4 398.0,403.4 397.0,403.4 396.0,403.4 395.0,403.4 394.0,403.4 393.0,403.4 392.0,403.4 391.0,403.4 390.0,403.4 389.0,403.4 388.0,403.4 387.0,403.4 386.0,403.4 385.0,403.4 384.0,403.4 383.0,403.4 382.0,403.4 381.0,403.4 380.0,403.4 379.0,403.4 378.0,403.4 377.0,403.4 376.0,403.4 375.0,403.4 374.0,403.4 373.0,403.4 372.0,403.4 371.0,403.4 370.0,403.4" fill="#00ff00" />
<polygon points="447.0,396.0 448.0,396.0 449.0,396.0 450.0,396.0 451.0,396.0 452.0,396.0 453.0,396.0 453.0,403.4 452.0,403.4 451.0,403.4 450.0,403.4 449.0,403.4 448.0,403.4 447.0,403.4" fill="#3cb371" />
<polygon points="453.0,396.0 454.0,396.0 455.0,396.0 456.0,396.0 457.0,396.0 458.0,396.0 459.0,396.0 460.0,396.0 461.0,396.0 462.0,396.0 463.0,396.0 464.0,396.0 465.0,396.0 466.0,396.0 467.0,396.0 467.0,403.4 466.0,403.4 465.0,403.4 464.0,403.4 463.0,403.4 462.0,403.4 461.0,403.4 460.0,403.4 459.0,403.4 458.0,403.4 457.0,403.4 456.0,403.4 455.0,403.4 454.0,403.4 453.0,403.4" fill="#00ff00" />
<polygon points="467.0,396.0 468.0,396.0 469.0,396.0 470.0,396.0 471.0,396.0 472.0,396.0 472.0,403.4 471.0,403.4 470.0,403.4 469.0,403.4 468.0,403.4 467.0,403.4" fill="#3cb371" />
<polygon points="472.0,396.0 473.0,396.0 474.0,396.0 475.0,396.0 476.0,396.0 477.0,396.0 478.0,396.0 479.0,396.0 480.0,396.0 481.0,396.0 482.0,396.0 483.0,396.0 484.0,396.0 485.0,396.0 486.0,396.0 487.0,396.0 488.0,396.0 489.0,396.0 490.0,396.0 491.0,396.0 492.0,396.0 493.0,396.0 494.0,396.0 495.0,396.0 496.0,396.0 497.0,396.0 498.0,396.0 499.0,396.0 500.0,396.0 501.0,396.0 502.0,396.0 503.0,396.0 504.0,396.0 505.0,396.0 506.0,396.0 507.0,396.0 508.0,396.0 509.0,396.0 510.0,396.0 511.0,396.0 512.0,396.0 513.0,396.0 514.0,396.0 515.0,396.0 516.0,396.0 517.0,396.0 518.0,396.0 519.0,396.0 520.0,396.0 521.0,396.0 522.0,396.0 523.0,396.0 524.0,396.0 525.0,396.0 526.0,396.0 527.0,396.0 528.0,396.0 529.0,396.0 530.0,396.0 531.0,396.0 532.0,396.0 533.0,396.0 533.0,403.4 532.0,403.4 531.0,403.4 530.0,403.4 529.0,403.4 528.0,403.4 527.0,403.4 526.0,403.4 525.0,403.4 524.0,403.4 523.0,403.4 522.0,403.4 521.0,403.4 520.0,403.4 519.0,403.4 518.0,403.4 517.0,403.4 516.0,403.4 515.0,403.4 514.0,403.4 513.0,403.4 512.0,403.4 511.0,403.4 510.0,403.4 509.0,403.4 508.0,403.4 507.0,403.4 506.0,403.4 505.0,403.4 504.0,403.4 503.0,403.4 502.0,403.4 501.0,403.4 500.0,403.4 499.0,403.4 498.0,403.4 497.0,403.4 496.0,403.4 495.0,403.4 494.0,403.4 493.0,403.4 492.0,403.4 491.0,403.4 490.0,403.4 489.0,403.4 488.0,403.4 487.0,403.4 486.0,403.4 485.0,403.4 484.0,403.4 483.0,403.4 482.0,403.4 481.0,403.4 480.0,403.4 479.0,403.4 478.0,403.4 477.0,403.4 476.0,403.4 475.0,403.4 474.0,403.4 473.0,403.4 472.0,403.4" fill="#00ff00" />
<polygon points="533.0,396.0 534.0,396.0 535.0,396.0 536.0,396.0 537.0,396.0 538.0,396.0 539.0,396.0 540.0,396.0 541.0,396.0 542.0,396.0 543.0,396.0 544.0,396.0 545.0,396.0 546.0,396.0 547.0,396.0 548.0,396.0 549.0,396.0 550.0,396.0 551.0,396.0 552.0,396.0 553.0,396.0 554.0,396.0 555.0,396.0 556.0,396.0 557.0,396.0 558.0,396.0 559.0,396.0 560.0,396.0 561.0,396.0 562.0,396.0 563.0,396.0 564.0,396.0 565.0,396.0 566.0,396.0 567.0,396.0 568.0,396.0 569.0,396.0 570.0,396.0 571.0,396.0 572.0,396.0 573.0,396.0 574.0,396.0 575.0,396.0 576.0,396.0 577.0,396.0 578.0,396.0 579.0,396.0 580.0,396.0 581.0,396.0 582.0,396.0 583.0,396.0 584.0,396.0 585.0,396.0 586.0,396.0 587.0,396.0 588.0,396.0 589.0,396.0 590.0,396.0 591.0,396.0 592.0,396.0 593.0,396.0 594.0,396.0 595.0,396.0 596.0,396.0 596.0,403.4 595.0,403.4 594.0,403.4 593.0,403.4 592.0,403.4 591.0,403.4 590.0,403.4 589.0,403.4 588.0,403.4 587.0,403.4 586.0,403.4 585.0,403.4 584.0,403.4 583.0,403.4 582.0,403.4 581.0,403.4 580.0,403.4 579.0,403.4 578.0,403.4 577.0,403.4 576.0,403.4 575.0,403.4 574.0,403.4 573.0,403.4 572.0,403.4 571.0,403.4 570.0,403.4 569.0,403.4 568.0,403.4 567.0,403.4 566.0,403.4 565.0,403.4 564.0,403.4 563.0,403.4 562.0,403.4 561.0,403.4 560.0,403.4 559.0,403.4 558.0,403.4 557.0,403.4 556.0,403.4 555.0,403.4 554.0,403.4 553.0,403.4 552.0,403.4 551.0,403.4 550.0,403.4 549.0,403.4 548.0,403.4 547.0,403.4 546.0,403.4 545.0,403.4 544.0,403.4 543.0,403.4 542.0,403.4 541.0,403.4 540.0,403.4 539.0,403.4 538.0,403.4 537.0,403.4 536.0,403.4 535.0,403.4 534.0,403.4 533.0,403.4" fill="#3cb371" />
<line x1="26" y1="389.4" x2="762" y2="389.4" stroke="#487474" stroke-width="1" stroke-dasharray="2.4 2.3"/>
<line x1="26" y1="396.4" x2="762" y2="396.4" stroke="#487474" stroke-width="1" stroke-dasharray="2.4 2.3"/>
<line x1="26" y1="403.4" x2="762" y2="403.4" stroke="#487474" stroke-width="1" stroke-dasharray="2.4 2.3"/>
<line x1="26" y1="410.4" x2="762" y2="410.4" stroke="#487474" stroke-width="1" stroke-dasharray="2.4 2.3"/>
<line x1="26" y1="418.4" x2="762" y2="418.4" stroke="#487474" stroke-width="1" stroke-dasharray="2.4 2.3"/>
<polyline points="26.0,412.8 40.0,414.3 55.0,415.3 80.0,415.8 100.0,415.8 117.0,414.3 130.0,412.5 150.0,412.5 160.0,410.0 170.0,409.0 200.0,408.5 230.0,408.3 260.0,406.5 300.0,404.5 330.0,403.0 370.0,402.0 400.0,400.0 450.0,397.0 520.0,396.0 595.0,396.0" fill="none" stroke="#a8a8a8" stroke-width="2" stroke-linejoin="round" />
<polyline points="26.0,410.8 40.0,412.3 55.0,413.3 80.0,413.8 100.0,413.8 117.0,412.3 130.0,410.5 150.0,410.5 160.0,408.0 170.0,407.0 200.0,406.5 230.0,406.3 260.0,404.5 300.0,402.5 330.0,401.0 370.0,400.0 400.0,398.0 450.0,395.0 520.0,394.0 595.0,394.0" fill="none" stroke="#dcdcdc" stroke-width="1.8" stroke-linejoin="round" />
<polyline points="25.6,441.0 28.4,432.5 35.0,431.2 38.5,425.5 44.0,424.0 50.0,418.0 53.0,416.0 57.0,413.5 62.0,414.5 72.0,413.0 76.0,412.0 80.0,413.0 86.0,412.0 90.0,411.0 93.0,409.0 97.0,406.8 110.0,407.4 120.0,408.5 125.0,409.0 137.0,404.0 150.0,407.4 154.0,413.5 158.0,404.0 163.0,394.0 172.5,396.0 180.0,400.0 193.0,403.0 199.0,406.6 206.0,407.5 210.0,411.0 215.6,410.0 225.0,402.0 230.0,401.4 232.5,404.0 238.0,393.5 242.0,391.8 250.0,394.0 255.0,391.2 265.0,389.6 270.0,390.0 275.0,393.5 282.0,394.6 290.0,392.4 297.0,394.6 305.0,395.8 310.0,393.4 318.8,396.0 324.0,403.0 330.0,404.7 337.5,403.8 342.0,407.5 347.8,414.0 352.5,410.0 358.0,413.0 362.0,406.6 367.5,406.6 370.0,385.0 376.0,381.0 382.5,389.7 395.6,383.0 402.0,381.0 410.6,383.0 420.0,390.6 431.0,395.0 440.6,392.5 449.0,397.0 462.5,392.5 469.0,396.0 485.0,391.4 494.0,393.6 507.5,394.7 530.0,394.7 557.0,397.0 595.0,396.0" fill="none" stroke="#0a8a0a" stroke-width="3" stroke-linejoin="round" />
<rect x="368.5" y="375" width="3" height="28" fill="#ffff00"/>
<rect x="157.5" y="399" width="3" height="6" fill="#f0f000"/>
<rect x="193" y="402" width="3" height="3" fill="#f0f000"/>
<rect x="222" y="401" width="3" height="2.5" fill="#f0f000"/>
<rect x="233" y="402" width="3" height="2.5" fill="#f0f000"/>
<rect x="324" y="403" width="3" height="2" fill="#f0f000"/>
<text x="28.60" y="381" font-family="Liberation Sans" font-size="8" fill="#e8e8e8" font-weight="normal" text-anchor="start" textLength="302.60" lengthAdjust="spacingAndGlyphs">M5 (TrendCCI: 63, EntryCCI: 63)&#160; 82.2366 0.0000 82.2366 0.0000 0.0000 101.7788 82.2366</text>
<text x="765.10" y="378.9" font-family="Liberation Sans" font-size="8.2" fill="#ececec" font-weight="normal" text-anchor="start" textLength="30.10" lengthAdjust="spacingAndGlyphs" stroke="#ececec" stroke-width="0.1">438.4072</text>
<text x="765.10" y="392.5" font-family="Liberation Sans" font-size="8.2" fill="#ececec" font-weight="normal" text-anchor="start" textLength="12.10" lengthAdjust="spacingAndGlyphs" stroke="#ececec" stroke-width="0.1">200</text>
<text x="765.10" y="399.5" font-family="Liberation Sans" font-size="8.2" fill="#ececec" font-weight="normal" text-anchor="start" textLength="12.10" lengthAdjust="spacingAndGlyphs" stroke="#ececec" stroke-width="0.1">100</text>
<text x="764.60" y="406.7" font-family="Liberation Sans" font-size="8.2" fill="#ececec" font-weight="normal" text-anchor="start" textLength="15.10" lengthAdjust="spacingAndGlyphs" stroke="#ececec" stroke-width="0.1">0.00</text>
<text x="764.60" y="413.5" font-family="Liberation Sans" font-size="8.2" fill="#ececec" font-weight="normal" text-anchor="start" textLength="15.10" lengthAdjust="spacingAndGlyphs" stroke="#ececec" stroke-width="0.1">-100</text>
<text x="764.60" y="421.2" font-family="Liberation Sans" font-size="8.2" fill="#ececec" font-weight="normal" text-anchor="start" textLength="15.10" lengthAdjust="spacingAndGlyphs" stroke="#ececec" stroke-width="0.1">-200</text>
<text x="765.10" y="442.2" font-family="Liberation Sans" font-size="8.2" fill="#ececec" font-weight="normal" text-anchor="start" textLength="32.10" lengthAdjust="spacingAndGlyphs" stroke="#ececec" stroke-width="0.1">-554.1137</text>
<rect x="26" y="453" width="570" height="6.7" fill="#f08080"/>
<rect x="26" y="502.5" width="568.5" height="6.5" fill="#add8e6"/>
<line x1="597" y1="481.3" x2="762" y2="481.3" stroke="#c8c8c8" stroke-width="1" stroke-dasharray="2 2"/>
<rect x="25.50" y="481.3" width="2" height="30.6" fill="#f4a460"/>
<rect x="28.62" y="481.3" width="2" height="29.7" fill="#f4a460"/>
<rect x="31.75" y="481.3" width="2" height="28.8" fill="#f4a460"/>
<rect x="34.88" y="481.3" width="2" height="29.5" fill="#f4a460"/>
<rect x="38.00" y="481.3" width="2" height="30.4" fill="#f4a460"/>
<rect x="41.12" y="481.3" width="2" height="31.0" fill="#f4a460"/>
<rect x="44.25" y="481.3" width="2" height="31.4" fill="#f4a460"/>
<rect x="47.38" y="481.3" width="2" height="31.2" fill="#f4a460"/>
<rect x="51.00" y="481.3" width="1" height="27.5" fill="#8a8a8a"/>
<rect x="54.12" y="481.3" width="1" height="25.6" fill="#8a8a8a"/>
<rect x="57.25" y="481.3" width="1" height="25.5" fill="#8a8a8a"/>
<rect x="60.38" y="481.3" width="1" height="25.4" fill="#8a8a8a"/>
<rect x="63.50" y="481.3" width="1" height="25.2" fill="#8a8a8a"/>
<rect x="66.62" y="481.3" width="1" height="25.4" fill="#8a8a8a"/>
<rect x="69.75" y="481.3" width="1" height="25.7" fill="#8a8a8a"/>
<rect x="72.88" y="481.3" width="1" height="26.0" fill="#8a8a8a"/>
<rect x="76.00" y="481.3" width="1" height="26.6" fill="#8a8a8a"/>
<rect x="78.62" y="481.3" width="2" height="29.4" fill="#ff0000"/>
<rect x="81.75" y="481.3" width="2" height="30.2" fill="#ff0000"/>
<rect x="84.88" y="481.3" width="2" height="30.5" fill="#ff0000"/>
<rect x="88.00" y="481.3" width="2" height="29.9" fill="#ff0000"/>
<rect x="91.62" y="481.3" width="1" height="26.7" fill="#8a8a8a"/>
<rect x="94.75" y="481.3" width="1" height="22.4" fill="#8a8a8a"/>
<rect x="97.88" y="481.3" width="1" height="18.6" fill="#8a8a8a"/>
<rect x="101.00" y="481.3" width="1" height="16.2" fill="#8a8a8a"/>
<rect x="104.12" y="481.3" width="1" height="15.2" fill="#8a8a8a"/>
<rect x="107.25" y="481.3" width="1" height="15.4" fill="#8a8a8a"/>
<rect x="110.38" y="481.3" width="1" height="16.5" fill="#8a8a8a"/>
<rect x="113.50" y="481.3" width="1" height="17.7" fill="#8a8a8a"/>
<rect x="116.62" y="481.3" width="1" height="19.8" fill="#8a8a8a"/>
<rect x="119.75" y="481.3" width="1" height="21.9" fill="#8a8a8a"/>
<rect x="122.38" y="481.3" width="2" height="23.6" fill="#ff0000"/>
<rect x="125.50" y="481.3" width="2" height="25.1" fill="#f4a460"/>
<rect x="128.62" y="481.3" width="2" height="25.7" fill="#f4a460"/>
<rect x="131.75" y="481.3" width="2" height="24.1" fill="#ff0000"/>
<rect x="135.38" y="481.3" width="1" height="22.5" fill="#8a8a8a"/>
<rect x="138.50" y="481.3" width="1" height="21.0" fill="#8a8a8a"/>
<rect x="141.62" y="481.3" width="1" height="19.5" fill="#8a8a8a"/>
<rect x="144.75" y="481.3" width="1" height="19.5" fill="#8a8a8a"/>
<rect x="147.88" y="481.3" width="1" height="21.1" fill="#8a8a8a"/>
<rect x="150.50" y="481.3" width="2" height="22.8" fill="#ff0000"/>
<rect x="153.62" y="481.3" width="2" height="24.7" fill="#ff0000"/>
<rect x="157.25" y="481.3" width="1" height="23.3" fill="#8a8a8a"/>
<rect x="160.38" y="481.3" width="1" height="11.1" fill="#8a8a8a"/>
<rect x="163.50" y="476.0" width="1" height="5.3" fill="#8a8a8a"/>
<rect x="166.62" y="467.9" width="1" height="13.4" fill="#8a8a8a"/>
<rect x="169.75" y="464.8" width="1" height="16.6" fill="#8a8a8a"/>
<rect x="172.88" y="462.7" width="1" height="18.6" fill="#8a8a8a"/>
<rect x="176.00" y="463.6" width="1" height="17.7" fill="#8a8a8a"/>
<rect x="179.12" y="465.8" width="1" height="15.5" fill="#8a8a8a"/>
<rect x="182.25" y="469.4" width="1" height="11.9" fill="#8a8a8a"/>
<rect x="185.38" y="472.9" width="1" height="8.4" fill="#8a8a8a"/>
<rect x="188.50" y="476.2" width="1" height="5.1" fill="#8a8a8a"/>
<rect x="191.62" y="479.2" width="1" height="2.1" fill="#8a8a8a"/>
<rect x="194.75" y="481.3" width="1" height="1.0" fill="#8a8a8a"/>
<rect x="197.88" y="481.3" width="1" height="4.3" fill="#8a8a8a"/>
<rect x="201.00" y="481.3" width="1" height="7.4" fill="#8a8a8a"/>
<rect x="204.12" y="481.3" width="1" height="10.1" fill="#8a8a8a"/>
<rect x="207.25" y="481.3" width="1" height="11.8" fill="#8a8a8a"/>
<rect x="210.38" y="481.3" width="1" height="13.0" fill="#8a8a8a"/>
<rect x="213.50" y="481.3" width="1" height="14.1" fill="#8a8a8a"/>
<rect x="216.62" y="481.3" width="1" height="14.3" fill="#8a8a8a"/>
<rect x="219.75" y="481.3" width="1" height="13.4" fill="#8a8a8a"/>
<rect x="222.88" y="481.3" width="1" height="12.3" fill="#8a8a8a"/>
<rect x="226.00" y="481.3" width="1" height="8.6" fill="#8a8a8a"/>
<rect x="229.12" y="481.3" width="1" height="5.5" fill="#8a8a8a"/>
<rect x="232.25" y="481.3" width="1" height="4.6" fill="#8a8a8a"/>
<rect x="235.38" y="481.3" width="1" height="3.7" fill="#8a8a8a"/>
<rect x="238.50" y="480.8" width="1" height="0.5" fill="#8a8a8a"/>
<rect x="241.62" y="476.5" width="1" height="4.8" fill="#8a8a8a"/>
<rect x="244.75" y="473.5" width="1" height="7.8" fill="#8a8a8a"/>
<rect x="247.88" y="470.6" width="1" height="10.7" fill="#8a8a8a"/>
<rect x="251.00" y="468.1" width="1" height="13.2" fill="#8a8a8a"/>
<rect x="254.12" y="465.8" width="1" height="15.5" fill="#8a8a8a"/>
<rect x="257.25" y="463.4" width="1" height="17.9" fill="#8a8a8a"/>
<rect x="260.38" y="460.8" width="1" height="20.5" fill="#8a8a8a"/>
<rect x="263.50" y="458.0" width="1" height="23.3" fill="#8a8a8a"/>
<rect x="266.62" y="458.4" width="1" height="22.9" fill="#8a8a8a"/>
<rect x="269.75" y="458.8" width="1" height="22.5" fill="#8a8a8a"/>
<rect x="272.88" y="459.4" width="1" height="21.9" fill="#8a8a8a"/>
<rect x="276.00" y="460.3" width="1" height="21.0" fill="#8a8a8a"/>
<rect x="279.12" y="461.2" width="1" height="20.1" fill="#8a8a8a"/>
<rect x="282.25" y="461.7" width="1" height="19.6" fill="#8a8a8a"/>
<rect x="285.38" y="462.0" width="1" height="19.3" fill="#8a8a8a"/>
<rect x="288.50" y="462.2" width="1" height="19.1" fill="#8a8a8a"/>
<rect x="291.62" y="462.5" width="1" height="18.8" fill="#8a8a8a"/>
<rect x="294.75" y="461.2" width="1" height="20.1" fill="#8a8a8a"/>
<rect x="297.88" y="459.8" width="1" height="21.5" fill="#8a8a8a"/>
<rect x="301.00" y="458.9" width="1" height="22.4" fill="#8a8a8a"/>
<rect x="304.12" y="458.7" width="1" height="22.6" fill="#8a8a8a"/>
<rect x="307.25" y="458.5" width="1" height="22.8" fill="#8a8a8a"/>
<rect x="309.88" y="458.3" width="2" height="23.0" fill="#0a8a0a"/>
<rect x="313.00" y="458.1" width="2" height="23.2" fill="#0a8a0a"/>
<rect x="316.62" y="457.9" width="1" height="23.4" fill="#8a8a8a"/>
<rect x="319.75" y="459.6" width="1" height="21.7" fill="#8a8a8a"/>
<rect x="322.88" y="463.3" width="1" height="18.0" fill="#8a8a8a"/>
<rect x="326.00" y="467.3" width="1" height="14.0" fill="#8a8a8a"/>
<rect x="329.12" y="471.5" width="1" height="9.8" fill="#8a8a8a"/>
<rect x="332.25" y="473.7" width="1" height="7.6" fill="#8a8a8a"/>
<rect x="335.38" y="475.6" width="1" height="5.7" fill="#8a8a8a"/>
<rect x="338.50" y="477.9" width="1" height="3.4" fill="#8a8a8a"/>
<rect x="341.62" y="480.5" width="1" height="0.8" fill="#8a8a8a"/>
<rect x="344.75" y="481.3" width="1" height="2.0" fill="#8a8a8a"/>
<rect x="347.88" y="481.3" width="1" height="6.0" fill="#8a8a8a"/>
<rect x="351.00" y="481.3" width="1" height="9.9" fill="#8a8a8a"/>
<rect x="354.12" y="481.3" width="1" height="13.3" fill="#8a8a8a"/>
<rect x="357.25" y="481.3" width="1" height="13.9" fill="#8a8a8a"/>
<rect x="360.38" y="481.3" width="1" height="12.5" fill="#8a8a8a"/>
<rect x="363.50" y="481.3" width="1" height="10.6" fill="#8a8a8a"/>
<rect x="366.62" y="481.3" width="1" height="3.3" fill="#8a8a8a"/>
<rect x="369.75" y="477.3" width="1" height="4.0" fill="#8a8a8a"/>
<rect x="372.88" y="471.0" width="1" height="10.3" fill="#8a8a8a"/>
<rect x="376.00" y="465.0" width="1" height="16.3" fill="#8a8a8a"/>
<rect x="379.12" y="460.6" width="1" height="20.7" fill="#8a8a8a"/>
<rect x="382.25" y="460.6" width="1" height="20.7" fill="#8a8a8a"/>
<rect x="385.38" y="460.0" width="1" height="21.3" fill="#8a8a8a"/>
<rect x="388.50" y="459.1" width="1" height="22.2" fill="#8a8a8a"/>
<rect x="391.62" y="457.2" width="1" height="24.1" fill="#8a8a8a"/>
<rect x="394.75" y="455.0" width="1" height="26.3" fill="#8a8a8a"/>
<rect x="397.38" y="452.7" width="2" height="28.6" fill="#00ff00"/>
<rect x="400.50" y="450.5" width="2" height="30.8" fill="#00ff00"/>
<rect x="403.62" y="449.1" width="2" height="32.2" fill="#00ff00"/>
<rect x="406.75" y="448.4" width="2" height="32.9" fill="#00ff00"/>
<rect x="409.88" y="447.8" width="2" height="33.5" fill="#00ff00"/>
<rect x="413.00" y="448.7" width="2" height="32.6" fill="#00ff00"/>
<rect x="416.12" y="451.2" width="2" height="30.1" fill="#00ff00"/>
<rect x="419.25" y="453.6" width="2" height="27.7" fill="#00ff00"/>
<rect x="422.88" y="456.4" width="1" height="24.9" fill="#8a8a8a"/>
<rect x="426.00" y="459.5" width="1" height="21.8" fill="#8a8a8a"/>
<rect x="429.12" y="462.6" width="1" height="18.7" fill="#8a8a8a"/>
<rect x="432.25" y="463.0" width="1" height="18.3" fill="#8a8a8a"/>
<rect x="435.38" y="461.3" width="1" height="20.0" fill="#8a8a8a"/>
<rect x="438.50" y="459.6" width="1" height="21.7" fill="#8a8a8a"/>
<rect x="441.62" y="458.8" width="1" height="22.5" fill="#8a8a8a"/>
<rect x="444.75" y="458.9" width="1" height="22.4" fill="#8a8a8a"/>
<rect x="447.88" y="459.0" width="1" height="22.3" fill="#8a8a8a"/>
<rect x="451.00" y="458.4" width="1" height="22.9" fill="#8a8a8a"/>
<rect x="454.12" y="457.0" width="1" height="24.3" fill="#8a8a8a"/>
<rect x="457.25" y="455.7" width="1" height="25.6" fill="#8a8a8a"/>
<rect x="460.38" y="454.6" width="1" height="26.7" fill="#8a8a8a"/>
<rect x="463.50" y="453.7" width="1" height="27.6" fill="#8a8a8a"/>
<rect x="466.62" y="452.9" width="1" height="28.4" fill="#8a8a8a"/>
<rect x="469.75" y="452.0" width="1" height="29.3" fill="#8a8a8a"/>
<rect x="472.88" y="451.2" width="1" height="30.1" fill="#8a8a8a"/>
<rect x="475.50" y="450.1" width="2" height="31.2" fill="#00ff00"/>
<rect x="478.62" y="449.0" width="2" height="32.3" fill="#00ff00"/>
<rect x="481.75" y="447.9" width="2" height="33.4" fill="#00ff00"/>
<rect x="484.88" y="448.4" width="2" height="32.9" fill="#00ff00"/>
<rect x="488.00" y="450.0" width="2" height="31.3" fill="#00ff00"/>
<rect x="491.62" y="451.6" width="1" height="29.7" fill="#8a8a8a"/>
<rect x="494.75" y="452.9" width="1" height="28.4" fill="#8a8a8a"/>
<rect x="497.88" y="454.3" width="1" height="27.0" fill="#8a8a8a"/>
<rect x="501.00" y="455.6" width="1" height="25.7" fill="#8a8a8a"/>
<rect x="504.12" y="455.3" width="1" height="26.0" fill="#8a8a8a"/>
<rect x="507.25" y="454.2" width="1" height="27.1" fill="#8a8a8a"/>
<rect x="510.38" y="453.1" width="1" height="28.2" fill="#8a8a8a"/>
<rect x="513.00" y="452.0" width="2" height="29.3" fill="#0c8c0c"/>
<rect x="515.00" y="452.0" width="0.8" height="29.3" fill="#30d030"/>
<rect x="516.12" y="451.1" width="2" height="30.2" fill="#0c8c0c"/>
<rect x="518.12" y="451.1" width="0.8" height="30.2" fill="#30d030"/>
<rect x="519.25" y="450.3" width="2" height="31.0" fill="#0c8c0c"/>
<rect x="521.25" y="450.3" width="0.8" height="31.0" fill="#30d030"/>
<rect x="522.38" y="449.4" width="2" height="31.9" fill="#0c8c0c"/>
<rect x="524.38" y="449.4" width="0.8" height="31.9" fill="#30d030"/>
<rect x="525.50" y="448.5" width="2" height="32.8" fill="#0c8c0c"/>
<rect x="527.50" y="448.5" width="0.8" height="32.8" fill="#30d030"/>
<rect x="528.62" y="448.9" width="2" height="32.4" fill="#0c8c0c"/>
<rect x="530.62" y="448.9" width="0.8" height="32.4" fill="#30d030"/>
<rect x="531.75" y="449.6" width="2" height="31.8" fill="#0c8c0c"/>
<rect x="533.75" y="449.6" width="0.8" height="31.8" fill="#30d030"/>
<rect x="534.88" y="450.2" width="2" height="31.1" fill="#0c8c0c"/>
<rect x="536.88" y="450.2" width="0.8" height="31.1" fill="#30d030"/>
<rect x="538.00" y="450.8" width="2" height="30.5" fill="#0c8c0c"/>
<rect x="540.00" y="450.8" width="0.8" height="30.5" fill="#30d030"/>
<rect x="541.12" y="450.8" width="2" height="30.5" fill="#0c8c0c"/>
<rect x="543.12" y="450.8" width="0.8" height="30.5" fill="#30d030"/>
<rect x="544.25" y="450.4" width="2" height="30.9" fill="#0c8c0c"/>
<rect x="546.25" y="450.4" width="0.8" height="30.9" fill="#30d030"/>
<rect x="547.38" y="450.1" width="2" height="31.2" fill="#0c8c0c"/>
<rect x="549.38" y="450.1" width="0.8" height="31.2" fill="#30d030"/>
<rect x="550.50" y="449.8" width="2" height="31.5" fill="#0c8c0c"/>
<rect x="552.50" y="449.8" width="0.8" height="31.5" fill="#30d030"/>
<rect x="553.62" y="449.4" width="2" height="31.9" fill="#0c8c0c"/>
<rect x="555.62" y="449.4" width="0.8" height="31.9" fill="#30d030"/>
<rect x="556.75" y="449.6" width="2" height="31.7" fill="#0c8c0c"/>
<rect x="558.75" y="449.6" width="0.8" height="31.7" fill="#30d030"/>
<rect x="559.88" y="449.8" width="2" height="31.5" fill="#0c8c0c"/>
<rect x="561.88" y="449.8" width="0.8" height="31.5" fill="#30d030"/>
<rect x="563.00" y="449.9" width="2" height="31.4" fill="#0c8c0c"/>
<rect x="565.00" y="449.9" width="0.8" height="31.4" fill="#30d030"/>
<rect x="566.12" y="450.1" width="2" height="31.2" fill="#0c8c0c"/>
<rect x="568.12" y="450.1" width="0.8" height="31.2" fill="#30d030"/>
<rect x="569.25" y="450.3" width="2" height="31.0" fill="#0c8c0c"/>
<rect x="571.25" y="450.3" width="0.8" height="31.0" fill="#30d030"/>
<rect x="572.38" y="449.7" width="2" height="31.6" fill="#0c8c0c"/>
<rect x="574.38" y="449.7" width="0.8" height="31.6" fill="#30d030"/>
<rect x="575.50" y="449.2" width="2" height="32.1" fill="#0c8c0c"/>
<rect x="577.50" y="449.2" width="0.8" height="32.1" fill="#30d030"/>
<rect x="578.62" y="448.6" width="2" height="32.7" fill="#0c8c0c"/>
<rect x="580.62" y="448.6" width="0.8" height="32.7" fill="#30d030"/>
<rect x="581.75" y="448.3" width="2" height="33.0" fill="#0c8c0c"/>
<rect x="583.75" y="448.3" width="0.8" height="33.0" fill="#30d030"/>
<rect x="584.88" y="448.0" width="2" height="33.3" fill="#00ff00"/>
<rect x="588.00" y="447.8" width="2" height="33.5" fill="#00ff00"/>
<rect x="591.12" y="447.5" width="2" height="33.8" fill="#00ff00"/>
<rect x="594.25" y="447.5" width="2" height="33.8" fill="#00ff00"/>
<path d="M26.0 512.0 C27.2 511.7 30.7 510.0 33.0 510.0 C35.3 510.0 37.5 511.5 40.0 512.0 C42.5 512.5 45.8 513.8 48.0 513.0 C50.2 512.2 50.2 508.1 53.0 507.0 C55.8 505.9 61.2 506.4 65.0 506.5 C68.8 506.6 73.5 506.8 76.0 507.5 C78.5 508.2 78.5 510.2 80.0 511.0 C81.5 511.8 83.3 512.0 85.0 512.0 C86.7 512.0 88.3 512.3 90.0 511.0 C91.7 509.7 93.3 506.2 95.0 504.0 C96.7 501.8 98.2 499.3 100.0 498.0 C101.8 496.7 103.7 495.8 106.0 496.0 C108.3 496.2 111.5 497.7 114.0 499.0 C116.5 500.3 118.5 502.3 121.0 503.8 C123.5 505.2 126.2 507.5 128.8 507.5 C131.2 507.5 133.5 505.0 136.0 503.8 C138.5 502.5 141.2 500.0 143.8 500.0 C146.2 500.0 148.8 502.5 151.0 503.8 C153.2 505.0 155.2 510.1 157.0 507.5 C158.8 504.9 160.7 494.2 162.0 488.0 C163.3 481.8 163.2 474.2 165.0 470.0 C166.8 465.8 170.3 463.5 172.5 462.5 C174.7 461.5 175.5 462.0 178.0 464.0 C180.5 466.0 184.7 471.7 187.5 474.7 C190.3 477.7 192.8 479.8 195.0 482.0 C197.2 484.2 198.8 486.2 200.6 488.0 C202.4 489.8 203.5 491.2 206.0 492.5 C208.5 493.8 212.8 495.8 215.6 496.0 C218.4 496.2 220.8 495.5 223.0 494.0 C225.2 492.5 226.8 488.5 229.0 487.0 C231.2 485.5 233.8 486.7 236.0 485.0 C238.2 483.3 239.8 479.1 242.0 476.6 C244.2 474.1 246.2 472.4 249.0 470.0 C251.8 467.6 256.5 464.5 259.0 462.5 C261.5 460.5 261.8 458.6 264.0 458.0 C266.2 457.4 269.2 458.4 272.0 459.0 C274.8 459.6 277.6 461.0 281.0 461.6 C284.4 462.2 289.3 462.9 292.5 462.5 C295.7 462.1 295.6 459.8 300.0 459.0 C304.4 458.2 314.8 457.0 318.8 457.8 C322.8 458.6 322.1 461.6 324.0 464.0 C325.9 466.4 327.8 469.9 330.0 472.0 C332.2 474.1 335.0 474.8 337.5 476.6 C340.0 478.4 342.5 480.4 345.0 483.0 C347.5 485.6 350.7 490.3 352.5 492.5 C354.3 494.7 354.1 496.0 356.0 496.0 C357.9 496.0 361.2 495.9 363.8 492.5 C366.2 489.1 368.5 480.9 371.0 475.6 C373.5 470.3 376.6 463.1 378.8 460.6 C380.9 458.1 382.1 460.9 384.0 460.6 C385.9 460.3 386.8 460.6 390.0 458.8 C393.2 456.9 399.2 451.3 403.0 449.4 C406.8 447.5 409.3 446.6 412.5 447.5 C415.7 448.4 418.9 452.2 422.0 455.0 C425.1 457.8 427.9 463.4 431.0 464.0 C434.1 464.6 437.4 459.6 440.6 458.8 C443.8 457.9 446.9 459.6 450.0 459.0 C453.1 458.4 455.4 456.3 459.4 455.0 C463.4 453.7 469.9 452.2 474.0 451.0 C478.1 449.8 480.8 447.3 484.0 447.5 C487.2 447.7 489.9 450.6 493.0 452.0 C496.1 453.4 499.0 456.0 502.5 456.0 C506.0 456.0 509.9 453.3 514.0 452.0 C518.1 450.7 522.7 448.6 527.0 448.4 C531.3 448.2 535.3 450.8 540.0 451.0 C544.7 451.2 550.0 449.5 555.0 449.4 C560.0 449.3 565.7 450.5 570.0 450.3 C574.3 450.1 577.2 448.9 581.0 448.4 C584.8 447.9 590.0 447.6 592.5 447.5 C595.0 447.4 595.4 447.5 596.0 447.5" fill="none" stroke="#7a7a7a" stroke-width="2" stroke-linecap="round" />
<polyline points="26.0,509.5 27.0,509.2 28.0,508.9 29.0,508.6 30.0,508.4 31.0,508.1 32.0,507.8 33.0,507.5 34.0,507.8 35.0,508.1 36.0,508.4 37.0,508.6 38.0,508.9 39.0,509.2 40.0,509.5 41.0,509.6 42.0,509.8 43.0,509.9 44.0,510.0 45.0,510.1 46.0,510.2 47.0,510.4 48.0,510.5 49.0,509.3 50.0,508.1 51.0,506.9 52.0,505.7 53.0,504.5 54.0,504.5 55.0,504.4 56.0,504.4 57.0,504.3 58.0,504.3 59.0,504.2 60.0,504.2 61.0,504.2 62.0,504.1 63.0,504.1 64.0,504.0 65.0,504.0 66.0,504.1 67.0,504.2 68.0,504.3 69.0,504.4 70.0,504.5 71.0,504.5 72.0,504.6 73.0,504.7 74.0,504.8 75.0,504.9 76.0,505.0 77.0,505.9 78.0,506.8 79.0,507.6 80.0,508.5 81.0,508.7 82.0,508.9 83.0,509.1 84.0,509.3 85.0,509.5 86.0,509.3 87.0,509.1 88.0,508.9 89.0,508.7 90.0,508.5 91.0,507.1 92.0,505.7 93.0,504.3" fill="none" stroke="#8b0000" stroke-width="2" stroke-linejoin="round" />
<polyline points="118.0,499.2 119.0,499.9 120.0,500.6 121.0,501.2 122.0,501.7 123.0,502.2 124.0,502.7 125.0,503.2 126.0,503.7 127.0,504.2 128.0,504.6 129.0,504.9 130.0,504.4 131.0,503.8 132.0,503.3 133.0,502.8 134.0,502.3 135.0,501.8 136.0,501.2 137.0,500.8 138.0,500.3 139.0,499.8 140.0,499.3 141.0,498.8 142.0,498.3 143.0,497.9 144.0,497.6 145.0,498.1 146.0,498.7 147.0,499.2 148.0,499.7 149.0,500.2 150.0,500.7 151.0,501.2 152.0,501.9 153.0,502.5 154.0,503.1 155.0,503.8 156.0,504.4 157.0,505.0 158.0,501.1 159.0,497.2 160.0,493.3" fill="none" stroke="#8b0000" stroke-width="2" stroke-linejoin="round" />
<polyline points="26.0,508.0 34.0,505.0 40.0,506.0 50.0,507.0 53.0,505.0" fill="none" stroke="#ff0000" stroke-width="2.5" stroke-linejoin="round" />
<polyline points="256.0,464.8 257.0,464.0 258.0,463.2 259.0,462.5 260.0,461.6 261.0,460.7 262.0,459.8 263.0,458.9 264.0,458.0 265.0,458.1 266.0,458.2 267.0,458.4 268.0,458.5 269.0,458.6 270.0,458.8 271.0,458.9 272.0,459.0 273.0,459.3 274.0,459.6 275.0,459.9 276.0,460.2 277.0,460.4 278.0,460.7 279.0,461.0 280.0,461.3 281.0,461.6 282.0,461.7 283.0,461.8" fill="none" stroke="#108a10" stroke-width="3" stroke-linejoin="round" />
<polyline points="298.0,459.9 299.0,459.5 300.0,459.0 301.0,458.9 302.0,458.9 303.0,458.8 304.0,458.7 305.0,458.7 306.0,458.6 307.0,458.6 308.0,458.5 309.0,458.4 310.0,458.4 311.0,458.3 312.0,458.2 313.0,458.2 314.0,458.1 315.0,458.0 316.0,458.0 317.0,457.9 318.0,457.8 319.0,458.1 320.0,459.3" fill="none" stroke="#108a10" stroke-width="3" stroke-linejoin="round" />
<polyline points="420.0,453.4 421.0,454.2 422.0,455.0 423.0,456.0 424.0,457.0 425.0,458.0 426.0,459.0 427.0,460.0 428.0,461.0 429.0,462.0 430.0,463.0 431.0,464.0 432.0,463.5" fill="none" stroke="#108a10" stroke-width="3" stroke-linejoin="round" />
<polyline points="438.0,460.2 439.0,459.6 440.0,459.1 441.0,458.8 442.0,458.8 443.0,458.8 444.0,458.8 445.0,458.9 446.0,458.9 447.0,458.9 448.0,458.9 449.0,459.0 450.0,459.0 451.0,458.6 452.0,458.1 453.0,457.7 454.0,457.3 455.0,456.9 456.0,456.4 457.0,456.0 458.0,455.6 459.0,455.2 460.0,454.8 461.0,454.6 462.0,454.3 463.0,454.0 464.0,453.7 465.0,453.5 466.0,453.2 467.0,452.9 468.0,452.6 469.0,452.4 470.0,452.1 471.0,451.8 472.0,451.5 473.0,451.3 474.0,451.0 475.0,450.6 476.0,450.3 477.0,449.9 478.0,449.6 479.0,449.2 480.0,448.9 481.0,448.6 482.0,448.2 483.0,447.9 484.0,447.5 485.0,448.0 486.0,448.5 487.0,449.0 488.0,449.5 489.0,450.0 490.0,450.5 491.0,451.0 492.0,451.5 493.0,452.0 494.0,452.4 495.0,452.8 496.0,453.3 497.0,453.7 498.0,454.1 499.0,454.5 500.0,454.9 501.0,455.4 502.0,455.8 503.0,455.8 504.0,455.5 505.0,455.1 506.0,454.8 507.0,454.4 508.0,454.1 509.0,453.7 510.0,453.4 511.0,453.0 512.0,452.7 513.0,452.3 514.0,452.0 515.0,451.7 516.0,451.4 517.0,451.2 518.0,450.9 519.0,450.6 520.0,450.3 521.0,450.1 522.0,449.8 523.0,449.5 524.0,449.2 525.0,449.0 526.0,448.7 527.0,448.4 528.0,448.6 529.0,448.8 530.0,449.0 531.0,449.2 532.0,449.4 533.0,449.6 534.0,449.8 535.0,450.0 536.0,450.2 537.0,450.4 538.0,450.6 539.0,450.8 540.0,451.0 541.0,450.9 542.0,450.8 543.0,450.7 544.0,450.6 545.0,450.5 546.0,450.4 547.0,450.3 548.0,450.1 549.0,450.0 550.0,449.9 551.0,449.8 552.0,449.7 553.0,449.6 554.0,449.5 555.0,449.4 556.0,449.5 557.0,449.5 558.0,449.6 559.0,449.6 560.0,449.7 561.0,449.8 562.0,449.8 563.0,449.9 564.0,449.9 565.0,450.0 566.0,450.1 567.0,450.1 568.0,450.2 569.0,450.2 570.0,450.3 571.0,450.1 572.0,450.0 573.0,449.8 574.0,449.6 575.0,449.4 576.0,449.3 577.0,449.1 578.0,448.9 579.0,448.7 580.0,448.6 581.0,448.4 582.0,448.3 583.0,448.2 584.0,448.2 585.0,448.1 586.0,448.0 587.0,447.9 588.0,447.9 589.0,447.8 590.0,447.7 591.0,447.6 592.0,447.5 593.0,447.5 594.0,447.5 595.0,447.5 596.0,447.5" fill="none" stroke="#108a10" stroke-width="3" stroke-linejoin="round" />
<path d="M51.0 507.0 C51.5 506.3 52.0 504.0 54.0 503.0 C56.0 502.0 59.8 504.4 63.0 501.0 C66.2 497.6 70.7 484.7 73.0 482.5 C75.3 480.3 75.5 485.2 77.0 488.0 C78.5 490.8 80.5 497.5 82.0 499.5 C83.5 501.5 84.7 500.9 86.0 500.0 C87.3 499.1 88.7 496.8 90.0 494.0 C91.3 491.2 92.7 487.7 94.0 483.0 C95.3 478.3 96.9 469.9 98.0 466.0 C99.1 462.1 98.9 459.4 100.6 459.7 C102.3 460.0 106.1 465.6 108.0 468.0 C109.9 470.4 110.4 472.4 112.0 474.0 C113.6 475.6 115.8 473.8 117.5 477.5 C119.2 481.2 120.3 491.3 122.0 496.0 C123.7 500.7 126.0 504.0 127.8 505.6 C129.6 507.2 130.8 511.2 132.5 505.6 C134.2 500.0 136.3 478.8 138.0 472.0 C139.7 465.2 141.0 465.0 142.8 465.0 C144.6 465.0 147.3 469.0 149.0 472.0 C150.7 475.0 151.7 478.2 153.0 483.0 C154.3 487.8 155.7 501.0 157.0 501.0 C158.3 501.0 159.1 489.2 160.6 483.0 C162.1 476.8 164.8 468.3 166.0 464.0 C167.2 459.7 166.7 458.5 167.8 457.0 C168.9 455.5 170.8 454.6 172.5 455.0 C174.2 455.4 175.5 457.0 178.0 459.7 C180.5 462.4 184.7 467.8 187.5 471.0 C190.3 474.2 192.5 476.0 195.0 479.0 C197.5 482.0 200.7 485.9 202.5 488.8 C204.3 491.6 204.4 493.0 206.0 496.0 C207.6 499.0 209.8 504.8 212.0 506.6 C214.2 508.4 217.2 508.4 219.0 506.6 C220.8 504.8 221.3 501.0 223.0 496.0 C224.7 491.0 227.2 480.6 229.0 476.6 C230.8 472.6 232.2 474.4 234.0 472.0 C235.8 469.6 238.1 465.7 240.0 462.5 C241.9 459.3 242.5 455.4 245.6 453.0 C248.7 450.6 255.3 448.1 258.8 448.4 C262.1 448.7 263.5 452.2 266.0 455.0 C268.5 457.8 271.2 462.5 273.8 465.0 C276.2 467.5 277.9 467.0 281.0 470.0 C284.1 473.0 289.3 481.5 292.5 483.0 C295.7 484.5 297.8 480.8 300.0 479.0 C302.2 477.2 303.4 474.0 305.6 472.0 C307.8 470.0 310.8 467.0 313.0 467.0 C315.2 467.0 316.9 466.8 318.8 472.0 C320.6 477.2 321.8 492.1 324.0 498.0 C326.2 503.9 330.1 505.3 332.0 507.5 C333.9 509.7 333.4 510.6 335.6 511.0 C337.8 511.4 341.9 510.7 345.0 510.0 C348.1 509.3 351.2 509.5 354.0 506.6 C356.8 503.7 358.8 499.3 362.0 492.5 C365.2 485.7 370.2 471.8 373.0 466.0 C375.8 460.2 376.6 458.0 378.8 457.8 C380.9 457.6 383.5 464.5 386.0 465.0 C388.5 465.5 390.9 462.6 393.8 460.6 C396.6 458.6 399.3 453.9 403.0 453.0 C406.7 452.1 411.9 451.8 416.0 455.0 C420.1 458.2 424.7 467.8 427.5 472.0 C430.3 476.2 430.5 480.2 433.0 480.0 C435.5 479.8 439.7 470.7 442.5 471.0 C445.3 471.3 447.2 482.2 450.0 482.0 C452.8 481.8 456.9 472.8 459.4 470.0 C461.9 467.2 462.8 465.3 465.0 465.0 C467.2 464.7 470.0 468.7 472.5 468.0 C475.0 467.3 476.9 461.5 480.0 460.6 C483.1 459.7 487.2 461.1 491.0 462.5 C494.8 463.9 499.0 468.7 502.5 469.0 C506.0 469.3 508.9 465.8 512.0 464.4 C515.1 463.0 518.2 460.9 521.0 460.6 C523.8 460.3 525.8 460.6 529.0 462.5 C532.2 464.4 537.2 469.5 540.0 472.0 C542.8 474.5 543.1 476.9 545.6 477.5 C548.1 478.1 552.5 474.5 555.0 475.6 C557.5 476.7 558.4 483.1 560.6 484.0 C562.8 484.9 565.8 480.8 568.0 481.0 C570.2 481.2 571.8 485.5 574.0 485.0 C576.2 484.5 579.0 481.2 581.0 478.0 C583.0 474.8 584.5 469.2 586.0 466.0 C587.5 462.8 588.8 460.6 590.0 459.0 C591.2 457.4 591.9 456.3 593.0 456.5 C594.1 456.7 595.9 459.4 596.5 460.0" fill="none" stroke="#f0a000" stroke-width="1.3" stroke-linecap="round" />
<path d="M470.0 463.0 C471.2 461.7 474.7 456.9 477.0 455.0 C479.3 453.1 481.7 451.3 484.0 451.5 C486.3 451.7 489.8 455.2 491.0 456.0" fill="none" stroke="#909090" stroke-width="3.2" stroke-linecap="round" />
<path d="M470.0 463.0 C471.2 461.7 474.7 456.9 477.0 455.0 C479.3 453.1 481.7 451.3 484.0 451.5 C486.3 451.7 489.8 455.2 491.0 456.0" fill="none" stroke="#10ff10" stroke-width="2" stroke-linecap="round" />
<path d="M510.0 462.0 C510.8 461.5 513.3 459.2 515.0 459.0 C516.7 458.8 518.5 460.6 520.0 460.5 C521.5 460.4 522.7 458.4 524.0 458.5 C525.3 458.6 527.3 460.6 528.0 461.0" fill="none" stroke="#909090" stroke-width="3.2" stroke-linecap="round" />
<path d="M510.0 462.0 C510.8 461.5 513.3 459.2 515.0 459.0 C516.7 458.8 518.5 460.6 520.0 460.5 C521.5 460.4 522.7 458.4 524.0 458.5 C525.3 458.6 527.3 460.6 528.0 461.0" fill="none" stroke="#10ff10" stroke-width="2" stroke-linecap="round" />
<path d="M97.0 470.2 C97.2 469.5 97.7 467.1 98.0 466.0 C98.3 464.9 98.7 464.4 99.0 463.6 C99.3 462.8 99.7 461.7 100.0 461.2 C100.3 460.6 100.7 460.1 101.0 460.1 C101.3 460.2 101.7 460.9 102.0 461.3 C102.3 461.6 102.8 462.2 103.0 462.4" fill="none" stroke="#909090" stroke-width="3.2" stroke-linecap="round" />
<path d="M97.0 470.2 C97.2 469.5 97.7 467.1 98.0 466.0 C98.3 464.9 98.7 464.4 99.0 463.6 C99.3 462.8 99.7 461.7 100.0 461.2 C100.3 460.6 100.7 460.1 101.0 460.1 C101.3 460.2 101.7 460.9 102.0 461.3 C102.3 461.6 102.8 462.2 103.0 462.4" fill="none" stroke="#10ff10" stroke-width="2" stroke-linecap="round" />
<path d="M163.0 474.6 C163.2 474.0 163.7 472.2 164.0 471.0 C164.3 469.9 164.7 468.7 165.0 467.5 C165.3 466.3 165.7 465.2 166.0 464.0 C166.3 462.8 166.7 461.3 167.0 460.1 C167.3 458.9 167.7 457.5 168.0 456.9 C168.3 456.3 168.7 456.6 169.0 456.5 C169.3 456.3 169.7 456.2 170.0 456.1 C170.3 455.9 170.7 455.8 171.0 455.6 C171.3 455.5 171.7 455.2 172.0 455.2 C172.3 455.2 172.7 455.2 173.0 455.4 C173.3 455.6 173.7 456.0 174.0 456.3 C174.3 456.6 174.7 456.9 175.0 457.1 C175.3 457.4 175.7 457.7 176.0 458.0 C176.3 458.3 176.8 458.7 177.0 458.8" fill="none" stroke="#909090" stroke-width="3.2" stroke-linecap="round" />
<path d="M163.0 474.6 C163.2 474.0 163.7 472.2 164.0 471.0 C164.3 469.9 164.7 468.7 165.0 467.5 C165.3 466.3 165.7 465.2 166.0 464.0 C166.3 462.8 166.7 461.3 167.0 460.1 C167.3 458.9 167.7 457.5 168.0 456.9 C168.3 456.3 168.7 456.6 169.0 456.5 C169.3 456.3 169.7 456.2 170.0 456.1 C170.3 455.9 170.7 455.8 171.0 455.6 C171.3 455.5 171.7 455.2 172.0 455.2 C172.3 455.2 172.7 455.2 173.0 455.4 C173.3 455.6 173.7 456.0 174.0 456.3 C174.3 456.6 174.7 456.9 175.0 457.1 C175.3 457.4 175.7 457.7 176.0 458.0 C176.3 458.3 176.8 458.7 177.0 458.8" fill="none" stroke="#10ff10" stroke-width="2" stroke-linecap="round" />
<path d="M237.0 467.2 C237.2 467.0 237.7 466.2 238.0 465.7 C238.3 465.1 238.7 464.6 239.0 464.1 C239.3 463.6 239.7 463.0 240.0 462.5 C240.3 462.0 240.7 461.4 241.0 460.8 C241.3 460.2 241.7 459.7 242.0 459.1 C242.3 458.5 242.7 458.0 243.0 457.4 C243.3 456.8 243.7 456.3 244.0 455.7 C244.3 455.1 244.7 454.5 245.0 454.0 C245.3 453.5 245.7 453.1 246.0 452.9 C246.3 452.6 246.7 452.6 247.0 452.5 C247.3 452.4 247.7 452.3 248.0 452.2 C248.3 452.0 248.7 451.9 249.0 451.8 C249.3 451.7 249.7 451.6 250.0 451.5 C250.3 451.3 250.7 451.2 251.0 451.1 C251.3 451.0 251.7 450.9 252.0 450.8 C252.3 450.6 252.7 450.5 253.0 450.4 C253.3 450.3 253.7 450.2 254.0 450.1 C254.3 449.9 254.7 449.8 255.0 449.7 C255.3 449.6 255.7 449.5 256.0 449.4 C256.3 449.2 256.7 449.1 257.0 449.0 C257.3 448.9 257.7 448.7 258.0 448.7 C258.3 448.6 258.7 448.5 259.0 448.6 C259.3 448.8 259.7 449.2 260.0 449.5 C260.3 449.8 260.7 450.1 261.0 450.4 C261.3 450.8 261.7 451.1 262.0 451.4 C262.3 451.7 262.7 452.0 263.0 452.3 C263.3 452.6 263.7 452.9 264.0 453.2 C264.3 453.5 264.7 453.8 265.0 454.1 C265.3 454.4 265.7 454.6 266.0 455.0 C266.3 455.4 266.7 455.9 267.0 456.3 C267.3 456.7 267.7 457.2 268.0 457.6 C268.3 458.0 268.8 458.7 269.0 458.9" fill="none" stroke="#909090" stroke-width="3.2" stroke-linecap="round" />
<path d="M237.0 467.2 C237.2 467.0 237.7 466.2 238.0 465.7 C238.3 465.1 238.7 464.6 239.0 464.1 C239.3 463.6 239.7 463.0 240.0 462.5 C240.3 462.0 240.7 461.4 241.0 460.8 C241.3 460.2 241.7 459.7 242.0 459.1 C242.3 458.5 242.7 458.0 243.0 457.4 C243.3 456.8 243.7 456.3 244.0 455.7 C244.3 455.1 244.7 454.5 245.0 454.0 C245.3 453.5 245.7 453.1 246.0 452.9 C246.3 452.6 246.7 452.6 247.0 452.5 C247.3 452.4 247.7 452.3 248.0 452.2 C248.3 452.0 248.7 451.9 249.0 451.8 C249.3 451.7 249.7 451.6 250.0 451.5 C250.3 451.3 250.7 451.2 251.0 451.1 C251.3 451.0 251.7 450.9 252.0 450.8 C252.3 450.6 252.7 450.5 253.0 450.4 C253.3 450.3 253.7 450.2 254.0 450.1 C254.3 449.9 254.7 449.8 255.0 449.7 C255.3 449.6 255.7 449.5 256.0 449.4 C256.3 449.2 256.7 449.1 257.0 449.0 C257.3 448.9 257.7 448.7 258.0 448.7 C258.3 448.6 258.7 448.5 259.0 448.6 C259.3 448.8 259.7 449.2 260.0 449.5 C260.3 449.8 260.7 450.1 261.0 450.4 C261.3 450.8 261.7 451.1 262.0 451.4 C262.3 451.7 262.7 452.0 263.0 452.3 C263.3 452.6 263.7 452.9 264.0 453.2 C264.3 453.5 264.7 453.8 265.0 454.1 C265.3 454.4 265.7 454.6 266.0 455.0 C266.3 455.4 266.7 455.9 267.0 456.3 C267.3 456.7 267.7 457.2 268.0 457.6 C268.3 458.0 268.8 458.7 269.0 458.9" fill="none" stroke="#10ff10" stroke-width="2" stroke-linecap="round" />
<path d="M371.0 470.8 C371.2 470.4 371.7 469.2 372.0 468.4 C372.3 467.6 372.7 466.6 373.0 466.0 C373.3 465.4 373.7 465.0 374.0 464.6 C374.3 464.1 374.7 463.6 375.0 463.1 C375.3 462.7 375.7 462.2 376.0 461.7 C376.3 461.2 376.7 460.8 377.0 460.3 C377.3 459.8 377.7 459.2 378.0 458.9 C378.3 458.5 378.7 458.0 379.0 458.0 C379.3 458.1 379.7 458.7 380.0 459.0 C380.3 459.4 380.8 459.9 381.0 460.0" fill="none" stroke="#909090" stroke-width="3.2" stroke-linecap="round" />
<path d="M371.0 470.8 C371.2 470.4 371.7 469.2 372.0 468.4 C372.3 467.6 372.7 466.6 373.0 466.0 C373.3 465.4 373.7 465.0 374.0 464.6 C374.3 464.1 374.7 463.6 375.0 463.1 C375.3 462.7 375.7 462.2 376.0 461.7 C376.3 461.2 376.7 460.8 377.0 460.3 C377.3 459.8 377.7 459.2 378.0 458.9 C378.3 458.5 378.7 458.0 379.0 458.0 C379.3 458.1 379.7 458.7 380.0 459.0 C380.3 459.4 380.8 459.9 381.0 460.0" fill="none" stroke="#10ff10" stroke-width="2" stroke-linecap="round" />
<path d="M397.0 457.9 C397.2 457.8 397.7 457.4 398.0 457.1 C398.3 456.8 398.7 456.6 399.0 456.3 C399.3 456.0 399.7 455.7 400.0 455.5 C400.3 455.2 400.7 454.9 401.0 454.6 C401.3 454.4 401.7 454.1 402.0 453.8 C402.3 453.5 402.7 453.1 403.0 453.0 C403.3 452.9 403.7 453.1 404.0 453.2 C404.3 453.2 404.7 453.3 405.0 453.3 C405.3 453.4 405.7 453.4 406.0 453.5 C406.3 453.5 406.7 453.6 407.0 453.6 C407.3 453.7 407.7 453.7 408.0 453.8 C408.3 453.8 408.7 453.9 409.0 453.9 C409.3 454.0 409.7 454.0 410.0 454.1 C410.3 454.1 410.7 454.2 411.0 454.2 C411.3 454.3 411.7 454.3 412.0 454.4 C412.3 454.4 412.7 454.5 413.0 454.5 C413.3 454.6 413.7 454.6 414.0 454.7 C414.3 454.7 414.7 454.8 415.0 454.8 C415.3 454.9 415.7 454.7 416.0 455.0 C416.3 455.3 416.7 456.0 417.0 456.5 C417.3 457.0 417.7 457.5 418.0 458.0 C418.3 458.4 418.7 458.9 419.0 459.4 C419.3 459.9 419.7 460.4 420.0 460.9 C420.3 461.4 420.8 462.1 421.0 462.4" fill="none" stroke="#909090" stroke-width="3.2" stroke-linecap="round" />
<path d="M397.0 457.9 C397.2 457.8 397.7 457.4 398.0 457.1 C398.3 456.8 398.7 456.6 399.0 456.3 C399.3 456.0 399.7 455.7 400.0 455.5 C400.3 455.2 400.7 454.9 401.0 454.6 C401.3 454.4 401.7 454.1 402.0 453.8 C402.3 453.5 402.7 453.1 403.0 453.0 C403.3 452.9 403.7 453.1 404.0 453.2 C404.3 453.2 404.7 453.3 405.0 453.3 C405.3 453.4 405.7 453.4 406.0 453.5 C406.3 453.5 406.7 453.6 407.0 453.6 C407.3 453.7 407.7 453.7 408.0 453.8 C408.3 453.8 408.7 453.9 409.0 453.9 C409.3 454.0 409.7 454.0 410.0 454.1 C410.3 454.1 410.7 454.2 411.0 454.2 C411.3 454.3 411.7 454.3 412.0 454.4 C412.3 454.4 412.7 454.5 413.0 454.5 C413.3 454.6 413.7 454.6 414.0 454.7 C414.3 454.7 414.7 454.8 415.0 454.8 C415.3 454.9 415.7 454.7 416.0 455.0 C416.3 455.3 416.7 456.0 417.0 456.5 C417.3 457.0 417.7 457.5 418.0 458.0 C418.3 458.4 418.7 458.9 419.0 459.4 C419.3 459.9 419.7 460.4 420.0 460.9 C420.3 461.4 420.8 462.1 421.0 462.4" fill="none" stroke="#10ff10" stroke-width="2" stroke-linecap="round" />
<path d="M584.0 470.8 C584.2 470.4 584.7 469.2 585.0 468.4 C585.3 467.6 585.7 466.7 586.0 466.0 C586.3 465.3 586.7 464.8 587.0 464.2 C587.3 463.7 587.7 463.1 588.0 462.5 C588.3 461.9 588.7 461.3 589.0 460.8 C589.3 460.2 589.7 459.4 590.0 459.0 C590.3 458.6 590.7 458.4 591.0 458.2 C591.3 457.9 591.7 457.6 592.0 457.3 C592.3 457.1 592.7 456.5 593.0 456.5 C593.3 456.5 593.7 457.2 594.0 457.5 C594.3 457.8 594.7 458.2 595.0 458.5 C595.3 458.8 595.7 459.2 596.0 459.5 C596.3 459.8 596.8 459.9 597.0 460.0" fill="none" stroke="#909090" stroke-width="3.2" stroke-linecap="round" />
<path d="M584.0 470.8 C584.2 470.4 584.7 469.2 585.0 468.4 C585.3 467.6 585.7 466.7 586.0 466.0 C586.3 465.3 586.7 464.8 587.0 464.2 C587.3 463.7 587.7 463.1 588.0 462.5 C588.3 461.9 588.7 461.3 589.0 460.8 C589.3 460.2 589.7 459.4 590.0 459.0 C590.3 458.6 590.7 458.4 591.0 458.2 C591.3 457.9 591.7 457.6 592.0 457.3 C592.3 457.1 592.7 456.5 593.0 456.5 C593.3 456.5 593.7 457.2 594.0 457.5 C594.3 457.8 594.7 458.2 595.0 458.5 C595.3 458.8 595.7 459.2 596.0 459.5 C596.3 459.8 596.8 459.9 597.0 460.0" fill="none" stroke="#10ff10" stroke-width="2" stroke-linecap="round" />
<path d="M203.0 489.8 C203.2 490.1 203.7 491.2 204.0 491.9 C204.3 492.5 204.7 493.2 205.0 493.9 C205.3 494.6 205.7 495.4 206.0 496.0 C206.3 496.6 206.7 497.2 207.0 497.8 C207.3 498.4 207.7 498.9 208.0 499.5 C208.3 500.1 208.7 500.7 209.0 501.3 C209.3 501.9 209.7 502.5 210.0 503.1 C210.3 503.7 210.7 504.2 211.0 504.8 C211.3 505.4 211.7 506.3 212.0 506.6 C212.3 506.9 212.7 506.6 213.0 506.6 C213.3 506.6 213.7 506.6 214.0 506.6 C214.3 506.6 214.7 506.6 215.0 506.6 C215.3 506.6 215.7 506.6 216.0 506.6 C216.3 506.6 216.7 506.6 217.0 506.6 C217.3 506.6 217.7 506.6 218.0 506.6 C218.3 506.6 218.7 507.0 219.0 506.6 C219.3 506.2 219.7 504.8 220.0 504.0 C220.3 503.1 220.8 501.7 221.0 501.3" fill="none" stroke="#909090" stroke-width="3" stroke-linecap="round" />
<path d="M203.0 489.8 C203.2 490.1 203.7 491.2 204.0 491.9 C204.3 492.5 204.7 493.2 205.0 493.9 C205.3 494.6 205.7 495.4 206.0 496.0 C206.3 496.6 206.7 497.2 207.0 497.8 C207.3 498.4 207.7 498.9 208.0 499.5 C208.3 500.1 208.7 500.7 209.0 501.3 C209.3 501.9 209.7 502.5 210.0 503.1 C210.3 503.7 210.7 504.2 211.0 504.8 C211.3 505.4 211.7 506.3 212.0 506.6 C212.3 506.9 212.7 506.6 213.0 506.6 C213.3 506.6 213.7 506.6 214.0 506.6 C214.3 506.6 214.7 506.6 215.0 506.6 C215.3 506.6 215.7 506.6 216.0 506.6 C216.3 506.6 216.7 506.6 217.0 506.6 C217.3 506.6 217.7 506.6 218.0 506.6 C218.3 506.6 218.7 507.0 219.0 506.6 C219.3 506.2 219.7 504.8 220.0 504.0 C220.3 503.1 220.8 501.7 221.0 501.3" fill="none" stroke="#e00000" stroke-width="1.8" stroke-linecap="round" />
<path d="M323.0 493.0 C323.2 493.9 323.7 497.0 324.0 498.0 C324.3 499.0 324.7 498.8 325.0 499.2 C325.3 499.6 325.7 500.0 326.0 500.4 C326.3 500.8 326.7 501.2 327.0 501.6 C327.3 502.0 327.7 502.4 328.0 502.8 C328.3 503.1 328.7 503.5 329.0 503.9 C329.3 504.3 329.7 504.7 330.0 505.1 C330.3 505.5 330.7 505.9 331.0 506.3 C331.3 506.7 331.7 507.1 332.0 507.5 C332.3 507.9 332.7 508.1 333.0 508.5 C333.3 508.8 333.7 509.1 334.0 509.4 C334.3 509.8 334.7 510.2 335.0 510.4 C335.3 510.7 335.7 510.9 336.0 511.0 C336.3 511.0 336.7 510.9 337.0 510.9 C337.3 510.8 337.7 510.8 338.0 510.7 C338.3 510.7 338.7 510.7 339.0 510.6 C339.3 510.6 339.7 510.6 340.0 510.5 C340.3 510.5 340.7 510.5 341.0 510.4 C341.3 510.4 341.7 510.4 342.0 510.3 C342.3 510.3 342.7 510.2 343.0 510.2 C343.3 510.2 343.7 510.1 344.0 510.1 C344.3 510.1 344.7 510.1 345.0 510.0 C345.3 509.9 345.7 509.7 346.0 509.6 C346.3 509.5 346.7 509.4 347.0 509.2 C347.3 509.1 347.7 509.0 348.0 508.9 C348.3 508.7 348.7 508.6 349.0 508.5 C349.3 508.4 349.7 508.2 350.0 508.1 C350.3 508.0 350.7 507.9 351.0 507.7 C351.3 507.6 351.7 507.5 352.0 507.4 C352.3 507.2 352.7 507.1 353.0 507.0 C353.3 506.9 353.7 507.0 354.0 506.6 C354.3 506.2 354.7 505.4 355.0 504.8 C355.3 504.3 355.7 503.7 356.0 503.1 C356.3 502.5 356.7 501.9 357.0 501.3 C357.3 500.7 357.8 499.8 358.0 499.6" fill="none" stroke="#909090" stroke-width="3" stroke-linecap="round" />
<path d="M323.0 493.0 C323.2 493.9 323.7 497.0 324.0 498.0 C324.3 499.0 324.7 498.8 325.0 499.2 C325.3 499.6 325.7 500.0 326.0 500.4 C326.3 500.8 326.7 501.2 327.0 501.6 C327.3 502.0 327.7 502.4 328.0 502.8 C328.3 503.1 328.7 503.5 329.0 503.9 C329.3 504.3 329.7 504.7 330.0 505.1 C330.3 505.5 330.7 505.9 331.0 506.3 C331.3 506.7 331.7 507.1 332.0 507.5 C332.3 507.9 332.7 508.1 333.0 508.5 C333.3 508.8 333.7 509.1 334.0 509.4 C334.3 509.8 334.7 510.2 335.0 510.4 C335.3 510.7 335.7 510.9 336.0 511.0 C336.3 511.0 336.7 510.9 337.0 510.9 C337.3 510.8 337.7 510.8 338.0 510.7 C338.3 510.7 338.7 510.7 339.0 510.6 C339.3 510.6 339.7 510.6 340.0 510.5 C340.3 510.5 340.7 510.5 341.0 510.4 C341.3 510.4 341.7 510.4 342.0 510.3 C342.3 510.3 342.7 510.2 343.0 510.2 C343.3 510.2 343.7 510.1 344.0 510.1 C344.3 510.1 344.7 510.1 345.0 510.0 C345.3 509.9 345.7 509.7 346.0 509.6 C346.3 509.5 346.7 509.4 347.0 509.2 C347.3 509.1 347.7 509.0 348.0 508.9 C348.3 508.7 348.7 508.6 349.0 508.5 C349.3 508.4 349.7 508.2 350.0 508.1 C350.3 508.0 350.7 507.9 351.0 507.7 C351.3 507.6 351.7 507.5 352.0 507.4 C352.3 507.2 352.7 507.1 353.0 507.0 C353.3 506.9 353.7 507.0 354.0 506.6 C354.3 506.2 354.7 505.4 355.0 504.8 C355.3 504.3 355.7 503.7 356.0 503.1 C356.3 502.5 356.7 501.9 357.0 501.3 C357.3 500.7 357.8 499.8 358.0 499.6" fill="none" stroke="#e00000" stroke-width="1.8" stroke-linecap="round" />
<text x="28.60" y="455.8" font-family="Liberation Sans" font-size="8" fill="#f4f4f4" font-weight="normal" text-anchor="start" textLength="437.10" lengthAdjust="spacingAndGlyphs" stroke="#f4f4f4" stroke-width="0.1">%R div: %R zones:&#160; HaosVisual wpr of Super smoother 48.1313 48.1313 48.1313 48.1313 32.0704 32.0704 32.0704 40.0000 -40.0000</text>
<text x="765.10" y="453.8" font-family="Liberation Sans" font-size="8.2" fill="#ececec" font-weight="normal" text-anchor="start" textLength="10.10" lengthAdjust="spacingAndGlyphs" stroke="#ececec" stroke-width="0.1">50</text>
<text x="765.10" y="484.8" font-family="Liberation Sans" font-size="8.2" fill="#ececec" font-weight="normal" text-anchor="start" textLength="14.60" lengthAdjust="spacingAndGlyphs" stroke="#ececec" stroke-width="0.1">0.00</text>
<text x="764.60" y="515.8" font-family="Liberation Sans" font-size="8.2" fill="#ececec" font-weight="normal" text-anchor="start" textLength="11.60" lengthAdjust="spacingAndGlyphs" stroke="#ececec" stroke-width="0.1">-50</text>
<rect x="764" y="480.8" width="2" height="1" fill="#c0c0c0"/>
<rect x="26.0" y="517" width="1" height="3" fill="#c8c8c8"/>
<text x="24.30" y="528" font-family="Liberation Sans" font-size="8" fill="#ececec" font-weight="normal" text-anchor="start" textLength="40.10" lengthAdjust="spacingAndGlyphs" stroke="#ececec" stroke-width="0.1">21 Oct 2022</text>
<rect x="76.0" y="517" width="1" height="3" fill="#c8c8c8"/>
<text x="74.30" y="528" font-family="Liberation Sans" font-size="8" fill="#ececec" font-weight="normal" text-anchor="start" textLength="42.60" lengthAdjust="spacingAndGlyphs" stroke="#ececec" stroke-width="0.1">21 Oct 10:05</text>
<rect x="126.0" y="517" width="1" height="3" fill="#c8c8c8"/>
<text x="124.30" y="528" font-family="Liberation Sans" font-size="8" fill="#ececec" font-weight="normal" text-anchor="start" textLength="42.60" lengthAdjust="spacingAndGlyphs" stroke="#ececec" stroke-width="0.1">21 Oct 11:25</text>
<rect x="176.0" y="517" width="1" height="3" fill="#c8c8c8"/>
<text x="174.30" y="528" font-family="Liberation Sans" font-size="8" fill="#ececec" font-weight="normal" text-anchor="start" textLength="42.60" lengthAdjust="spacingAndGlyphs" stroke="#ececec" stroke-width="0.1">21 Oct 12:45</text>
<rect x="226.0" y="517" width="1" height="3" fill="#c8c8c8"/>
<text x="224.30" y="528" font-family="Liberation Sans" font-size="8" fill="#ececec" font-weight="normal" text-anchor="start" textLength="42.60" lengthAdjust="spacingAndGlyphs" stroke="#ececec" stroke-width="0.1">21 Oct 14:05</text>
<rect x="276.0" y="517" width="1" height="3" fill="#c8c8c8"/>
<text x="274.30" y="528" font-family="Liberation Sans" font-size="8" fill="#ececec" font-weight="normal" text-anchor="start" textLength="42.60" lengthAdjust="spacingAndGlyphs" stroke="#ececec" stroke-width="0.1">21 Oct 15:25</text>
<rect x="326.0" y="517" width="1" height="3" fill="#c8c8c8"/>
<text x="324.30" y="528" font-family="Liberation Sans" font-size="8" fill="#ececec" font-weight="normal" text-anchor="start" textLength="42.60" lengthAdjust="spacingAndGlyphs" stroke="#ececec" stroke-width="0.1">21 Oct 16:45</text>
<rect x="376.0" y="517" width="1" height="3" fill="#c8c8c8"/>
<text x="374.30" y="528" font-family="Liberation Sans" font-size="8" fill="#ececec" font-weight="normal" text-anchor="start" textLength="42.60" lengthAdjust="spacingAndGlyphs" stroke="#ececec" stroke-width="0.1">21 Oct 18:05</text>
<rect x="426.0" y="517" width="1" height="3" fill="#c8c8c8"/>
<text x="424.30" y="528" font-family="Liberation Sans" font-size="8" fill="#ececec" font-weight="normal" text-anchor="start" textLength="42.60" lengthAdjust="spacingAndGlyphs" stroke="#ececec" stroke-width="0.1">21 Oct 19:25</text>
<rect x="476.0" y="517" width="1" height="3" fill="#c8c8c8"/>
<text x="474.30" y="528" font-family="Liberation Sans" font-size="8" fill="#ececec" font-weight="normal" text-anchor="start" textLength="42.60" lengthAdjust="spacingAndGlyphs" stroke="#ececec" stroke-width="0.1">21 Oct 20:45</text>
<rect x="526.0" y="517" width="1" height="3" fill="#c8c8c8"/>
<text x="524.30" y="528" font-family="Liberation Sans" font-size="8" fill="#ececec" font-weight="normal" text-anchor="start" textLength="42.60" lengthAdjust="spacingAndGlyphs" stroke="#ececec" stroke-width="0.1">21 Oct 22:05</text>
<rect x="576.0" y="517" width="1" height="3" fill="#c8c8c8"/>
<text x="574.30" y="528" font-family="Liberation Sans" font-size="8" fill="#ececec" font-weight="normal" text-anchor="start" textLength="42.60" lengthAdjust="spacingAndGlyphs" stroke="#ececec" stroke-width="0.1">21 Oct 23:25</text>
</svg>
<svg style="left:1px;top:1px" width="17" height="15" viewBox="0 0 17 15"><text x="4.5" y="12" font-family="Liberation Serif" font-style="italic" font-weight="bold" font-size="12" fill="#1a1a1a">S</text><path d="M2 11.5Q7 7.5 14.5 7Q9 8.5 3 12.5Z" fill="#f07a1a"/></svg>
<svg style="left:4px;top:19px" width="12" height="12" viewBox="0 0 12 12"><rect x="0.5" y="0.5" width="7" height="6" fill="#dfe9f7" stroke="#4a86d8"/><rect x="3.5" y="4.5" width="7" height="6.5" fill="#dfe9f7" stroke="#4a86d8"/><path d="M5 9l1.5-2 1.5 2 1.5-2" stroke="#4a86d8" fill="none" stroke-width="0.8"/></svg>
<div class="b" style="left:2px;top:38px;width:2px;height:1px;background:#a8a8a8"></div><div class="b" style="left:2px;top:40px;width:2px;height:1px;background:#a8a8a8"></div><div class="b" style="left:2px;top:42px;width:2px;height:1px;background:#a8a8a8"></div><div class="b" style="left:2px;top:44px;width:2px;height:1px;background:#a8a8a8"></div><div class="b" style="left:2px;top:46px;width:2px;height:1px;background:#a8a8a8"></div><div class="b" style="left:2px;top:48px;width:2px;height:1px;background:#a8a8a8"></div><div class="b" style="left:2px;top:50px;width:2px;height:1px;background:#a8a8a8"></div><div class="b" style="left:2px;top:52px;width:2px;height:1px;background:#a8a8a8"></div>
<div class="b" style="left:285px;top:38px;width:2px;height:1px;background:#a8a8a8"></div><div class="b" style="left:285px;top:40px;width:2px;height:1px;background:#a8a8a8"></div><div class="b" style="left:285px;top:42px;width:2px;height:1px;background:#a8a8a8"></div><div class="b" style="left:285px;top:44px;width:2px;height:1px;background:#a8a8a8"></div><div class="b" style="left:285px;top:46px;width:2px;height:1px;background:#a8a8a8"></div><div class="b" style="left:285px;top:48px;width:2px;height:1px;background:#a8a8a8"></div><div class="b" style="left:285px;top:50px;width:2px;height:1px;background:#a8a8a8"></div><div class="b" style="left:285px;top:52px;width:2px;height:1px;background:#a8a8a8"></div>
<div class="b" style="left:73px;top:37px;width:1px;height:15px;background:#b4b4b4"></div>
<div class="b" style="left:143px;top:37px;width:1px;height:15px;background:#b4b4b4"></div>
<div class="b" style="left:191px;top:37px;width:1px;height:15px;background:#b4b4b4"></div>
<div class="b" style="left:281px;top:37px;width:1px;height:15px;background:#b4b4b4"></div>
<div class="b" style="left:485px;top:37px;width:1px;height:15px;background:#b4b4b4"></div>
<div class="b" style="left:50px;top:36px;width:20px;height:17px;background:#f6f6f6;border:1px solid #b8b8b8;border-right-color:#fcfcfc;border-bottom-color:#fcfcfc;box-sizing:border-box"></div>
<div class="b" style="left:147px;top:36px;width:19px;height:17px;background:#f6f6f6;border:1px solid #b8b8b8;border-right-color:#fcfcfc;border-bottom-color:#fcfcfc;box-sizing:border-box"></div>
<div class="b" style="left:169px;top:36px;width:19px;height:17px;background:#f6f6f6;border:1px solid #b8b8b8;border-right-color:#fcfcfc;border-bottom-color:#fcfcfc;box-sizing:border-box"></div>
<svg style="left:8px;top:37px" width="18" height="16" viewBox="0 0 18 16"><path d="M4.5 2V14M2.5 12H14.5" stroke="#555" stroke-width="1.4" fill="none"/><path d="M12.5 10L15.5 12L12.5 14Z" fill="#555"/><path d="M7 10H9.5V4.5H12" stroke="#1a9a1a" stroke-width="1.5" fill="none"/></svg>
<svg style="left:30px;top:37px" width="18" height="16" viewBox="0 0 18 16"><path d="M4.5 2V14M2.5 12H14.5" stroke="#555" stroke-width="1.4" fill="none"/><path d="M12.5 10L15.5 12L12.5 14Z" fill="#555"/><rect x="7" y="2.5" width="4.5" height="7" rx="1" fill="#1fc01f" stroke="#0a7a0a" stroke-width="0.8"/><path d="M9.25 1V11" stroke="#0a7a0a" stroke-width="0.8"/></svg>
<svg style="left:52px;top:37px" width="18" height="16" viewBox="0 0 18 16"><path d="M4.5 2V14M2.5 12H14.5" stroke="#555" stroke-width="1.4" fill="none"/><path d="M12.5 10L15.5 12L12.5 14Z" fill="#555"/><path d="M5 8Q9 2 14 7" stroke="#1a9a1a" stroke-width="1.5" fill="none"/></svg>
<svg style="left:79px;top:37px" width="16" height="16" viewBox="0 0 16 16"><circle cx="6" cy="6" r="4.6" fill="#cfe6fa" stroke="#3a7cc8" stroke-width="1.4"/><path d="M9.5 9.5L13 13" stroke="#d8a820" stroke-width="2.6" stroke-linecap="round"/><path d="M3.5 6H8.5M6 3.5V8.5" stroke="#2a6ab8" stroke-width="1.4"/></svg>
<svg style="left:100px;top:38px" width="16" height="16" viewBox="0 0 16 16"><circle cx="6" cy="6" r="4.6" fill="#cfe6fa" stroke="#3a7cc8" stroke-width="1.4"/><path d="M9.5 9.5L13 13" stroke="#d8a820" stroke-width="2.6" stroke-linecap="round"/><path d="M3.5 6H8.5" stroke="#2a6ab8" stroke-width="1.4"/></svg>
<svg style="left:122px;top:38px" width="15" height="15" viewBox="0 0 15 15"><rect x="0.5" y="0.5" width="6.5" height="6.2" fill="#3fb13f"/><rect x="7.5" y="0.5" width="6.5" height="6.2" fill="#3a78d8"/><rect x="0.5" y="7" width="6.5" height="6.2" fill="#3a78d8"/><rect x="7.5" y="7" width="6.5" height="6.2" fill="#3fb13f"/><path d="M2 4H6M9 4H13M2 10.5H6M9 10.5H13" stroke="#fff" stroke-width="1.5"/></svg>
<svg style="left:149px;top:37px" width="18" height="16" viewBox="0 0 18 16"><path d="M5 2V14M3 12H15" stroke="#555" stroke-width="1.4" fill="none"/><path d="M13 10L16 12L13 14Z" fill="#555"/><path d="M9 4.5V9.5L12.5 7Z" fill="#20a820"/></svg>
<svg style="left:171px;top:37px" width="18" height="16" viewBox="0 0 18 16"><path d="M5 2V14M3 12H15" stroke="#555" stroke-width="1.4" fill="none"/><path d="M13 10L16 12L13 14Z" fill="#555"/><path d="M9 2V10" stroke="#4a8ad8" stroke-width="1.5"/><path d="M14 6H11M12 4L10 6L12 8" stroke="#d84020" stroke-width="1.4" fill="none"/></svg>
<svg style="left:198px;top:38px" width="15" height="17" viewBox="0 0 15 17"><path d="M1.5 1.5H7.5L10 4V10.5H1.5Z" fill="#f6f6f6" stroke="#858585"/><path d="M5.5 11.5H13.5M9.5 7.5V15.5" stroke="#ffffff" stroke-width="3.6"/><path d="M5.8 11.5H13.2M9.5 7.8V15.2" stroke="#1ab01a" stroke-width="2.2"/></svg>
<svg style="left:214px;top:43px" width="6" height="4" viewBox="0 0 6 4"><path d="M0 0H6L3 3.5Z" fill="#222"/></svg>
<svg style="left:243px;top:43px" width="6" height="4" viewBox="0 0 6 4"><path d="M0 0H6L3 3.5Z" fill="#222"/></svg>
<svg style="left:272px;top:43px" width="6" height="4" viewBox="0 0 6 4"><path d="M0 0H6L3 3.5Z" fill="#222"/></svg>
<svg style="left:227px;top:38px" width="14" height="14" viewBox="0 0 14 14"><circle cx="7" cy="7" r="5.6" fill="#fff" stroke="#2a6ac0" stroke-width="1.8"/><path d="M7 3.5V7H9.5" stroke="#333" stroke-width="1"/></svg>
<svg style="left:255px;top:39px" width="15" height="13" viewBox="0 0 15 13"><rect x="0.7" y="0.7" width="13.3" height="11" fill="#f8f8f8" stroke="#3a7cc8" stroke-width="1.4"/><path d="M2.5 6L5 4.5 7.5 5.5 10 3.8 12.5 4.5" stroke="#d84a20" fill="none" stroke-width="0.9"/><path d="M2.5 8.8L5 7.6 7.5 8.5 10 7.2 12.5 8" stroke="#20a040" fill="none" stroke-width="0.9"/></svg>
<svg style="left:757px;top:38px" width="12" height="12" viewBox="0 0 12 12"><circle cx="7.5" cy="4.5" r="3" fill="none" stroke="#3a78d8" stroke-width="1.5"/><path d="M5.5 6.5L1.5 10.5" stroke="#3a78d8" stroke-width="2.2" stroke-linecap="round"/></svg>
<svg style="left:776px;top:36px" width="22" height="16" viewBox="0 0 22 16"><ellipse cx="6" cy="11" rx="5" ry="3.5" fill="#e8e8e8" stroke="#c8c8c8"/><circle cx="13" cy="7" r="6.3" fill="#e03020"/><text x="10.5" y="10.5" font-family="Liberation Sans" font-size="9" font-weight="bold" fill="#fff">1</text></svg>
<div class="b" style="left:2px;top:58px;width:1px;height:2px;background:#a8a8a8"></div><div class="b" style="left:4px;top:58px;width:1px;height:2px;background:#a8a8a8"></div><div class="b" style="left:6px;top:58px;width:1px;height:2px;background:#a8a8a8"></div><div class="b" style="left:8px;top:58px;width:1px;height:2px;background:#a8a8a8"></div><div class="b" style="left:10px;top:58px;width:1px;height:2px;background:#a8a8a8"></div><div class="b" style="left:12px;top:58px;width:1px;height:2px;background:#a8a8a8"></div><div class="b" style="left:14px;top:58px;width:1px;height:2px;background:#a8a8a8"></div><div class="b" style="left:16px;top:58px;width:1px;height:2px;background:#a8a8a8"></div><div class="b" style="left:18px;top:58px;width:1px;height:2px;background:#a8a8a8"></div>
<div class="b" style="left:2px;top:273px;width:1px;height:2px;background:#a8a8a8"></div><div class="b" style="left:4px;top:273px;width:1px;height:2px;background:#a8a8a8"></div><div class="b" style="left:6px;top:273px;width:1px;height:2px;background:#a8a8a8"></div><div class="b" style="left:8px;top:273px;width:1px;height:2px;background:#a8a8a8"></div><div class="b" style="left:10px;top:273px;width:1px;height:2px;background:#a8a8a8"></div><div class="b" style="left:12px;top:273px;width:1px;height:2px;background:#a8a8a8"></div><div class="b" style="left:14px;top:273px;width:1px;height:2px;background:#a8a8a8"></div><div class="b" style="left:16px;top:273px;width:1px;height:2px;background:#a8a8a8"></div><div class="b" style="left:18px;top:273px;width:1px;height:2px;background:#a8a8a8"></div>
<div class="b" style="left:1px;top:104px;width:20px;height:1px;background:#b8b8b8"></div>
<div class="b" style="left:1px;top:208px;width:20px;height:1px;background:#b8b8b8"></div>
<div class="b" style="left:1px;top:318px;width:20px;height:1px;background:#b8b8b8"></div>
<div class="b" style="left:1px;top:476px;width:20px;height:1px;background:#b8b8b8"></div>
<div class="b" style="left:1px;top:277px;width:19px;height:19px;background:#f8f8f8;border:1px solid #b0b0b0;border-right-color:#fdfdfd;border-bottom-color:#fdfdfd;box-sizing:border-box"></div>
<svg style="left:3px;top:64px" width="16" height="14" viewBox="0 0 16 14"><rect x="0.7" y="0.7" width="10" height="8" fill="#e6eefa" stroke="#3a78d8" stroke-width="1.2"/><path d="M2.5 3.5H6M2.5 5.5H5" stroke="#3a78d8" stroke-width="0.8"/><path d="M7.5 9H15.5M11.5 5V13" stroke="#fff" stroke-width="3.6"/><path d="M8 9H15M11.5 5.5V12.5" stroke="#1ab01a" stroke-width="2.4"/></svg>
<svg style="left:3px;top:85px" width="16" height="14" viewBox="0 0 16 14"><rect x="0.7" y="0.7" width="10" height="8" fill="#e6eefa" stroke="#3a78d8" stroke-width="1.2"/><rect x="4.5" y="4.5" width="10" height="8.5" fill="#e6eefa" stroke="#3a78d8" stroke-width="1.2"/><path d="M6 9H13" stroke="#3a78d8" stroke-width="1"/></svg>
<svg style="left:3px;top:110px" width="14" height="14" viewBox="0 0 14 14"><rect x="0.7" y="0.7" width="12" height="12" rx="1" fill="#f8f8f8" stroke="#5a9ae0" stroke-width="1.2"/><path d="M2.5 5L5 2.5 7.5 5 5 7.5Z" fill="#20a020"/><path d="M6 9L8.5 6.5 11 9 8.5 11.5Z" fill="#e86030"/></svg>
<svg style="left:4px;top:130px" width="14" height="14" viewBox="0 0 14 14"><circle cx="7" cy="7" r="4" fill="none" stroke="#606060" stroke-width="1.2"/><path d="M7 1V13M1 7H13" stroke="#606060" stroke-width="1.2"/></svg>
<svg style="left:3px;top:149px" width="16" height="15" viewBox="0 0 16 15"><path d="M0.5 2.5H5L6.5 4H11V10H0.5Z" fill="#f4d870" stroke="#c8a030" stroke-width="0.8"/><path d="M11 6L12.5 9H15.5L13 11L14 14.5L11 12.5L8 14.5L9 11L6.5 9H9.5Z" fill="#f8d030" stroke="#c89a10" stroke-width="0.7"/></svg>
<svg style="left:4px;top:169px" width="14" height="13" viewBox="0 0 14 13"><rect x="0.7" y="0.7" width="12" height="11" rx="1" fill="#eef4fc" stroke="#3a78d8" stroke-width="1.3"/><rect x="1" y="1" width="3" height="10.5" fill="#3a78d8"/><path d="M6 4H12M6 6.5H12M6 9H12" stroke="#a8c4e8" stroke-width="0.8"/></svg>
<svg style="left:4px;top:188px" width="15" height="16" viewBox="0 0 15 16"><rect x="0.7" y="0.7" width="9" height="11" fill="#f4f4f4" stroke="#909090"/><circle cx="6" cy="8" r="3.8" fill="#cfe6fa" stroke="#3a7cc8" stroke-width="1.2"/><path d="M8.5 10.5L12 14" stroke="#d8a820" stroke-width="2" stroke-linecap="round"/></svg>
<svg style="left:3px;top:214px" width="15" height="14" viewBox="0 0 15 14"><path d="M1 8L7 2L14 6L8 12Z" fill="#f0c030" stroke="#a07010" stroke-width="0.9"/><path d="M1 8L8 12L8 13L1 9Z" fill="#c08020"/></svg>
<svg style="left:3px;top:233px" width="15" height="15" viewBox="0 0 15 15"><rect x="3" y="1" width="8" height="8" fill="#3a9ae8" stroke="#2070c0" stroke-width="0.8"/><path d="M5 3.5H9M5 6H9" stroke="#fff" stroke-width="0.8"/><ellipse cx="7.5" cy="11.5" rx="6.5" ry="2.8" fill="#f0f4fa" stroke="#6080a0" stroke-width="1"/></svg>
<svg style="left:3px;top:253px" width="15" height="15" viewBox="0 0 15 15"><circle cx="7.5" cy="7.5" r="6" fill="none" stroke="#6a8ad0" stroke-width="1.1"/><circle cx="7.5" cy="7.5" r="3.5" fill="none" stroke="#6a8ad0" stroke-width="1.1"/><circle cx="7.5" cy="7.5" r="1.5" fill="#2a5ab8"/><path d="M7.5 13.5A6 6 0 0 0 13.5 7.5" stroke="#20a020" stroke-width="1.8" fill="none"/></svg>
<svg style="left:6px;top:280px" width="9" height="14" viewBox="0 0 9 14"><path d="M1 1V12L3.8 9.3L6 13L7.6 12.2L5.5 8.5H9Z" fill="#404040"/></svg>
<svg style="left:3px;top:299px" width="15" height="15" viewBox="0 0 15 15"><path d="M7.5 1V14M1 7.5H14" stroke="#606060" stroke-width="1"/></svg>
<div class="b" style="left:10px;top:326px;width:1px;height:10px;background:#606060"></div>
<div class="b" style="left:6px;top:350px;width:10px;height:1px;background:#404040"></div>
<svg style="left:4px;top:363px" width="14" height="14" viewBox="0 0 14 14"><path d="M2 12L12 2" stroke="#505050" stroke-width="1.1"/></svg>
<svg style="left:4px;top:382px" width="15" height="15" viewBox="0 0 15 15"><path d="M1 9L9 2M2 12L11 4M4 13L12 6" stroke="#404040" stroke-width="1"/><path d="M1 6H10M2 9H11" stroke="#404040" stroke-width="0.7"/><text x="10" y="14.5" font-family="Liberation Sans" font-size="6" font-weight="bold" fill="#333">E</text></svg>
<svg style="left:4px;top:402px" width="15" height="14" viewBox="0 0 15 14"><path d="M1 1.5H12M1 4.5H12M1 7.5H12M1 10.5H12" stroke="#707070" stroke-width="1" stroke-dasharray="1.5 0.8"/><path d="M10 10L14 9L12 13Z" fill="#404040"/></svg>
<div class="t" style="left:7px;top:423px;font-size:10px;line-height:10px;font-weight:bold;color:#505050">A</div>
<svg style="left:5px;top:441px" width="12" height="12" viewBox="0 0 12 12"><rect x="0.5" y="0.5" width="11" height="11" fill="none" stroke="#909090" stroke-width="0.8" stroke-dasharray="1 1"/><path d="M3 3H9M6 3V10" stroke="#404040" stroke-width="1.6"/></svg>
<svg style="left:4px;top:460px" width="15" height="13" viewBox="0 0 15 13"><path d="M1 4L4 1L7 4L4 7Z" fill="#303030"/><path d="M8 9L11 6L14 9L11 12Z" fill="#303030"/><path d="M4 6L11 9" stroke="#303030" stroke-width="1"/></svg>
<svg style="left:703px;top:555px" width="20" height="11" viewBox="0 0 20 11"><rect x="0.00" y="0" width="1.9" height="7.50" fill="#3f8a1a"/><rect x="0.00" y="7.50" width="1.9" height="3.20" fill="#b81a14"/><rect x="2.35" y="0" width="1.9" height="6.65" fill="#3f8a1a"/><rect x="2.35" y="6.65" width="1.9" height="4.05" fill="#b81a14"/><rect x="4.70" y="0" width="1.9" height="5.80" fill="#3f8a1a"/><rect x="4.70" y="5.80" width="1.9" height="4.90" fill="#b81a14"/><rect x="7.05" y="0" width="1.9" height="4.95" fill="#3f8a1a"/><rect x="7.05" y="4.95" width="1.9" height="5.75" fill="#b81a14"/><rect x="9.40" y="0" width="1.9" height="4.10" fill="#3f8a1a"/><rect x="9.40" y="4.10" width="1.9" height="6.60" fill="#b81a14"/><rect x="11.75" y="0" width="1.9" height="3.25" fill="#3f8a1a"/><rect x="11.75" y="3.25" width="1.9" height="7.45" fill="#b81a14"/><rect x="14.10" y="0" width="1.9" height="2.40" fill="#3f8a1a"/><rect x="14.10" y="2.40" width="1.9" height="8.30" fill="#b81a14"/><rect x="16.45" y="0" width="1.9" height="1.55" fill="#3f8a1a"/><rect x="16.45" y="1.55" width="1.9" height="9.15" fill="#b81a14"/></svg>
<svg style="left:9px;top:573px" width="22" height="21" viewBox="0 0 22 21"><path d="M0 3L9 1.7V10H0Z M10 1.5L21 0V10H10Z M0 11H9V19.3L0 18Z M10 11H21V21L10 19.5Z" fill="#fff"/></svg>
<svg style="left:50px;top:572px" width="28" height="25" viewBox="0 0 28 25"><rect x="1" y="0" width="10" height="17" fill="#2a88d8" stroke="#e8f4fc" stroke-width="1"/><rect x="2" y="1" width="8" height="3" fill="#5ab0f0"/><rect x="6" y="12" width="20" height="12" rx="1" fill="#6a7e90" stroke="#f0f4f8" stroke-width="1"/><path d="M12 12V10H20V12" stroke="#f0f4f8" fill="none" stroke-width="1.2"/><path d="M8 17H24" stroke="#f0f4f8" stroke-width="1.4"/></svg>
<svg style="left:100px;top:575px" width="24" height="18" viewBox="0 0 24 18"><path d="M5 1H23L19 17H1Z" fill="#2462b4" stroke="#a0c8f0" stroke-width="0.8"/><path d="M7 5L12 9L6 13M12 14H16" stroke="#fff" stroke-width="1.6" fill="none"/></svg>
<svg style="left:148px;top:573px" width="28" height="23" viewBox="0 0 28 23"><path d="M1 3H10L12 5H25V21H1Z" fill="#f0c850" stroke="#c89a30" stroke-width="0.8"/><rect x="3" y="6" width="20" height="13" fill="#fff4d0"/><rect x="1" y="9" width="24" height="12" fill="#f8d870" stroke="#c89a30" stroke-width="0.8"/><rect x="7" y="14" width="12" height="6" fill="#4aa0e0" stroke="#2a70b0" stroke-width="0.8"/></svg>
<svg style="left:196px;top:572.2px" width="25" height="25" viewBox="0 0 25 25"><circle cx="12.5" cy="12.5" r="11.5" fill="#db4437"/><path d="M12.5 12.5L2.5 6.8A11.5 11.5 0 0 0 7 22.5Z" fill="#0f9d58"/><path d="M12.5 12.5L7 22.5A11.5 11.5 0 0 0 24 12.5Z" fill="#f4c20d"/><path d="M12.5 1A11.5 11.5 0 0 0 2.5 6.8L8 12.5H24A11.5 11.5 0 0 0 12.5 1Z" fill="#db4437"/><circle cx="12.5" cy="12.5" r="5.3" fill="#fff"/><circle cx="12.5" cy="12.5" r="4.2" fill="#4285f4"/></svg>
<svg style="left:243px;top:574px" width="30" height="20" viewBox="0 0 30 20"><text x="8.5" y="17.5" font-family="Liberation Serif" font-style="italic" font-weight="bold" font-size="18" fill="#111">S</text><path d="M2 14.5Q13 7 27.5 7.5Q17 9.5 4 15.5Z" fill="#f07818"/><path d="M12.5 10.5Q17 11 14.5 15" stroke="#111" stroke-width="1.6" fill="none"/></svg>
<svg style="left:631px;top:581px" width="8" height="5" viewBox="0 0 8 5"><path d="M0 4.5L4 0.5L8 4.5Z" fill="#000"/></svg>
<svg style="left:647px;top:578px" width="14" height="14" viewBox="0 0 14 14"><path d="M2 1V13" stroke="#555" stroke-width="1.2"/><path d="M2.5 1.5H10V8H2.5Z" fill="#f4f4f4" stroke="#888" stroke-width="0.8"/><circle cx="10" cy="10" r="3.6" fill="#e02020"/><path d="M8.3 8.3L11.7 11.7M11.7 8.3L8.3 11.7" stroke="#fff" stroke-width="1.2"/></svg>
<svg style="left:665px;top:577px" width="16" height="15" viewBox="0 0 16 15"><rect x="1" y="1" width="3.5" height="6" fill="#f0f0f0" stroke="#404040" stroke-width="0.9"/><rect x="5" y="3" width="10" height="7" fill="#f0f0f0" stroke="#404040" stroke-width="1"/><path d="M10 10V13M6 13.5H14" stroke="#404040" stroke-width="1"/></svg>
<svg style="left:684px;top:578px" width="15" height="13" viewBox="0 0 15 13"><path d="M1 4H4L7 1V12L4 9H1Z" fill="#f0f0f0" stroke="#505050" stroke-width="0.9"/><path d="M9 4Q10.5 6.5 9 9M11 2.5Q13.5 6.5 11 10.5" stroke="#505050" stroke-width="1" fill="none"/></svg>
</body></html>
